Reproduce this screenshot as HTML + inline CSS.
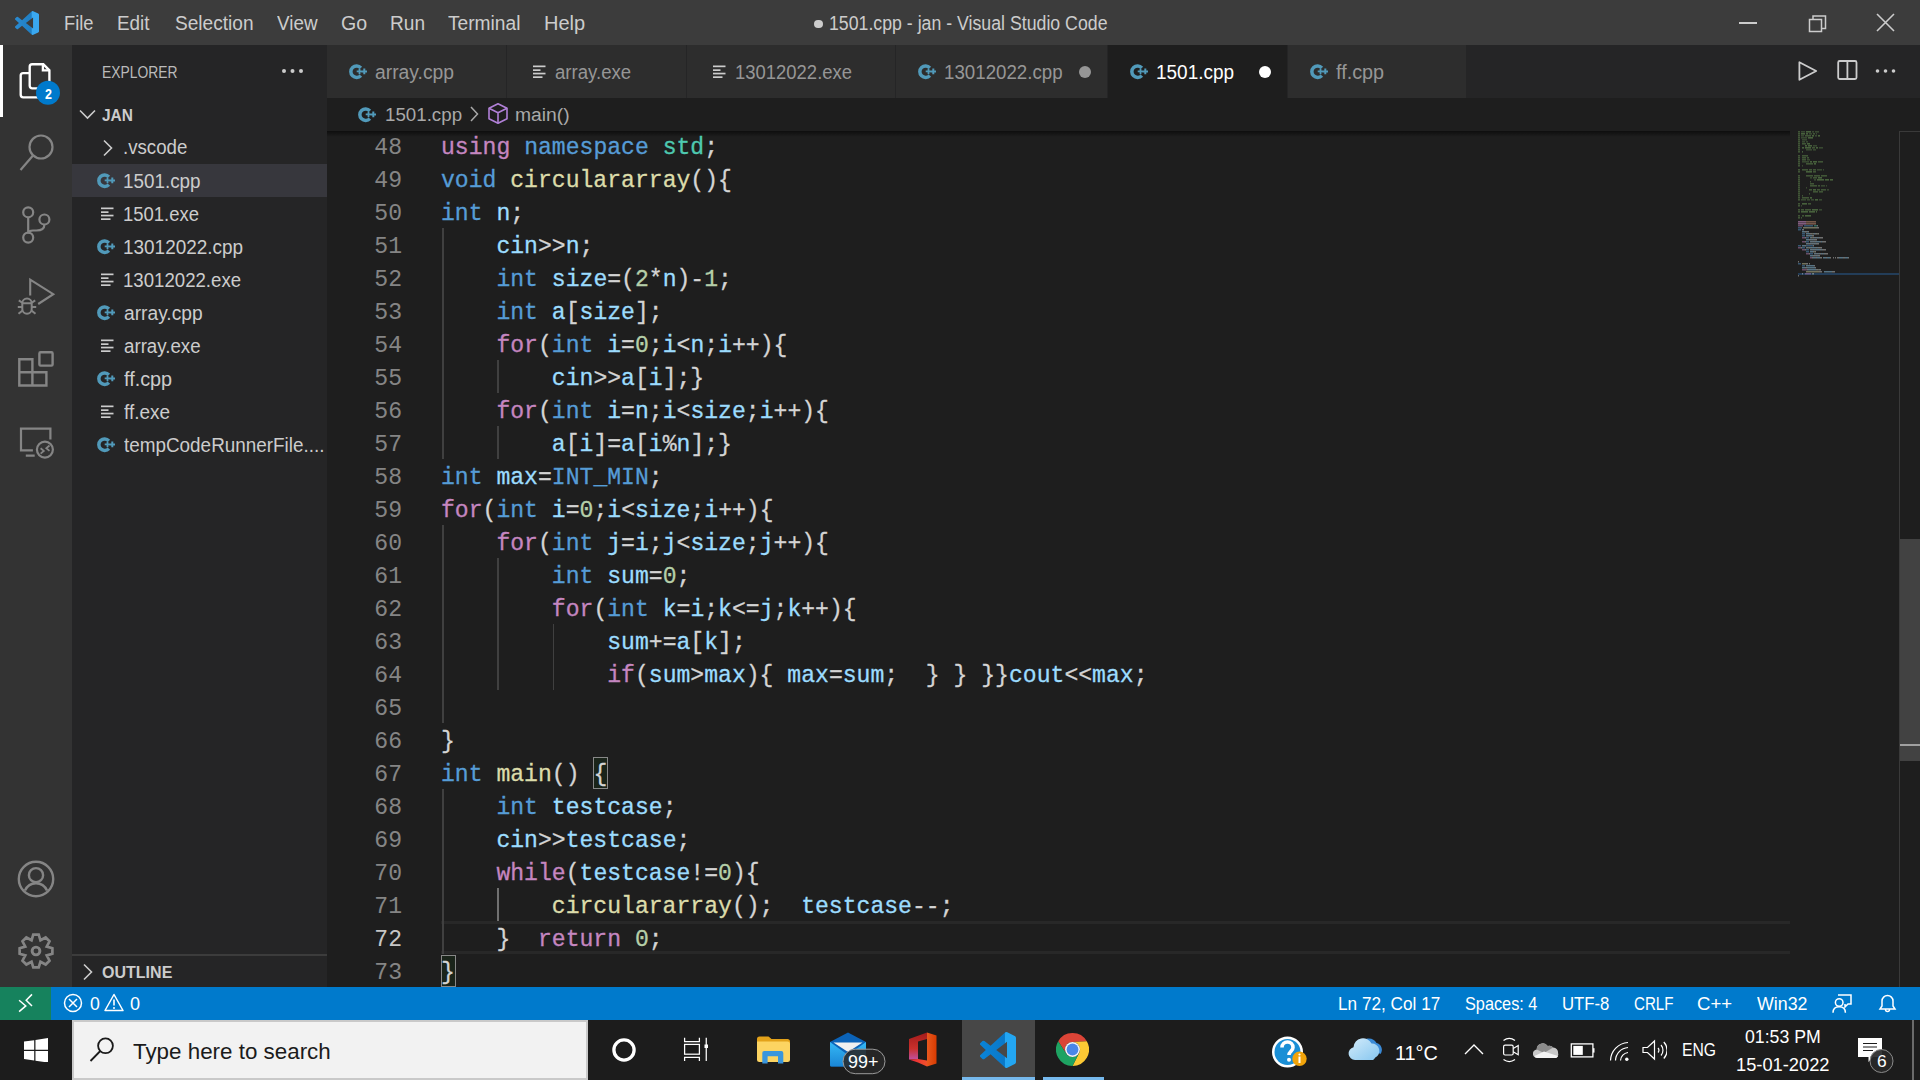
<!DOCTYPE html>
<html><head><meta charset="utf-8"><style>
html,body{margin:0;padding:0;width:1920px;height:1080px;overflow:hidden;background:#1e1e1e;position:relative}
body{font-family:'Liberation Sans', sans-serif}
</style></head><body>
<div style="position:absolute;left:0px;top:0px;width:1920px;height:45px;background:#3c3c3c;"></div>
<div style="position:absolute;left:0px;top:45px;width:72px;height:942px;background:#333333;"></div>
<div style="position:absolute;left:72px;top:45px;width:255px;height:942px;background:#252526;"></div>
<div style="position:absolute;left:327px;top:45px;width:1593px;height:52.5px;background:#252526;"></div>
<div style="position:absolute;left:327px;top:97.5px;width:1593px;height:889.5px;background:#1e1e1e;"></div>
<div style="position:absolute;left:0px;top:987px;width:1920px;height:33px;background:#007acc;"></div>
<div style="position:absolute;left:0px;top:987px;width:51px;height:33px;background:#16825d;"></div>
<div style="position:absolute;left:0px;top:1020px;width:1920px;height:60px;background:#1c1c1c;"></div>
<div style="position:absolute;left:814px;top:19.5px;width:8.5px;height:8.5px;border-radius:50%;background:#cccccc"></div>
<svg style="position:absolute;left:14.9px;top:10.8px" width="24.1" height="24" viewBox="0 0 24 24"><defs><linearGradient id="lg1" x1="0" y1="0" x2="1" y2="0"><stop offset="0" stop-color="#2a8ad0"/><stop offset="0.68" stop-color="#1f7fc4"/><stop offset="0.7" stop-color="#3aa8f0"/><stop offset="1" stop-color="#3aa8f0"/></linearGradient></defs><path fill="url(#lg1)" d="M23.15 2.587L18.21.21a1.494 1.494 0 0 0-1.705.29l-9.46 8.63-4.12-3.128a.999.999 0 0 0-1.276.057L.327 7.261A1 1 0 0 0 .326 8.74L3.899 12 .326 15.26a1 1 0 0 0 .001 1.479L1.65 17.94a.999.999 0 0 0 1.276.057l4.12-3.128 9.46 8.63a1.492 1.492 0 0 0 1.704.29l4.942-2.377A1.5 1.5 0 0 0 24 20.06V3.939a1.5 1.5 0 0 0-.85-1.352zm-5.146 14.861L10.826 12l7.178-5.448v10.896z"/></svg>
<div style="position:absolute;left:1739px;top:22px;width:18px;height:1.5px;background:#cccccc"></div>
<svg style="position:absolute;left:1805px;top:10px" width="26" height="26" viewBox="0 0 26 26"><path fill="none" stroke="#cccccc" stroke-width="1.5" d="M4.5 9.5h12v12h-12z M8 9.5V6h12.5v12.5H16.5"/></svg>
<svg style="position:absolute;left:1874px;top:11px" width="24" height="24" viewBox="0 0 24 24"><path stroke="#cccccc" stroke-width="1.6" d="M3 3L20 20M20 3L3 20"/></svg>
<div style="position:absolute;left:0px;top:45px;width:3px;height:72px;background:#ffffff;"></div>
<svg style="position:absolute;left:0;top:45px" width="72" height="942" viewBox="0 45 72 942">
<g fill="none" stroke="#ffffff" stroke-width="2.35" stroke-linejoin="miter">
<path d="M29.7 66.7a2.5 2.5 0 0 1 2.5-2.5H43.3L49.4 70.3V85.8a2.5 2.5 0 0 1-2.5 2.5H32.2a2.5 2.5 0 0 1-2.5-2.5Z"/>
<path d="M42.9 64.2V70.4H49.4"/>
<path d="M29.7 73.1H23.2a2.5 2.5 0 0 0-2.5 2.5V94.8a2.5 2.5 0 0 0 2.5 2.5H38"/>
</g>
<circle cx="48" cy="92.7" r="12" fill="#007acc"/>
<g fill="none" stroke="#858585" stroke-width="2.2">
<circle cx="41" cy="147" r="11.5"/>
<path d="M33 155.5L20.5 170"/>
<circle cx="28.2" cy="212.3" r="5"/><circle cx="44.4" cy="219.5" r="5"/><circle cx="28.2" cy="237.6" r="5"/>
<path d="M28.2 217.3v15.3 M44.4 224.5c0 4-3 6-8 6h-3.5c-2.5 0-4.3 1-4.3 3"/>
<path d="M30.2 295.6V279.6L53.3 294.2 38.2 304" stroke-width="2.1"/>
<path d="M22.3 303.3A4.7 4.7 0 0 1 31.7 303.3Z M22.3 303.3V309A4.7 4.7 0 0 0 31.7 309V303.3" stroke-width="2"/>
<path d="M18.8 300.4L22.3 302.8 M35.2 300.4L31.7 302.8 M17.8 307.1H22.3 M31.7 307.1H36.2 M18.5 313.8L22.6 310.5 M35.5 313.8L31.4 310.5" stroke-width="2"/>
<path d="M19.3 359.2h13.1v26.3h-13.1z M19.3 372.3h27.1v13.2H32.4" stroke-width="2.4"/>
<rect x="39.4" y="352.2" width="13.2" height="13.4" rx="1.2" stroke-width="2.4"/>
<path d="M50.4 439.6V428.6H21V450.4H32.9 M25.8 455.6h8.9" stroke-width="2.2"/>
<circle cx="44.9" cy="449.6" r="8" stroke-width="2.2"/>
<path d="M40.6 448.2l3.2 2.7-3.2 2.7 M49.5 445.5l-3.2 2.7 3.2 2.7" stroke-width="1.8"/>
<circle cx="36" cy="879" r="17.2" stroke-width="2.4"/>
<circle cx="36" cy="875.2" r="7.1" stroke-width="2.4"/>
<path d="M25 890.5c2-4.5 6.5-7.3 11-7.3s9 2.8 11 7.3" stroke-width="2.4"/>
<circle cx="36" cy="951" r="3.9" stroke-width="2.9"/>
<path d="M31.56 940.28 L33.26 934.63 L38.74 934.63 L40.44 940.28 L45.64 937.49 L49.51 941.36 L46.72 946.56 L52.37 948.26 L52.37 953.74 L46.72 955.44 L49.51 960.64 L45.64 964.51 L40.44 961.72 L38.74 967.37 L33.26 967.37 L31.56 961.72 L26.36 964.51 L22.49 960.64 L25.28 955.44 L19.63 953.74 L19.63 948.26 L25.28 946.56 L22.49 941.36 L26.36 937.49Z" stroke-width="2.7" stroke-linejoin="miter"/>
</g>
</svg>
<svg style="position:absolute;left:280px;top:66px" width="26" height="10"><circle cx="4" cy="5" r="2" fill="#cccccc"/><circle cx="12.5" cy="5" r="2" fill="#cccccc"/><circle cx="21" cy="5" r="2" fill="#cccccc"/></svg>
<svg style="position:absolute;left:76px;top:106px" width="22" height="16"><path d="M4 4.5l7.5 7.5 7.5-7.5" fill="none" stroke="#cccccc" stroke-width="1.6"/></svg>
<div style="position:absolute;left:72px;top:164px;width:255px;height:33px;background:#37373d;"></div>
<svg style="position:absolute;left:100px;top:138px" width="16" height="20"><path d="M4 2.5l7.5 7.5-7.5 7.5" fill="none" stroke="#cccccc" stroke-width="1.6"/></svg>
<svg style="position:absolute;left:97px;top:173px" width="18" height="16" viewBox="0 0 18 16"><path fill="none" stroke="#519aba" stroke-width="3.5" d="M11.87 3.85A5.75 5.75 0 1 0 11.87 11.55"/><path fill="#519aba" d="M7.7 6.5h1.9V4.6h1.8v1.9h1.9v1.8h-1.9v1.9H9.6V8.3H7.7z M12.4 6.4h1.9V4.5h2v1.9h1.9v2h-1.9v1.9h-2V8.4h-1.9z"/></svg>
<svg style="position:absolute;left:101px;top:207px" width="14" height="14" viewBox="0 0 14 14"><g fill="#cccccc"><rect x="0" y="0.5" width="12.5" height="1.7"/><rect x="0" y="4.3" width="7.5" height="1.7"/><rect x="0" y="7.7" width="12.5" height="1.7"/><rect x="0" y="11.3" width="9.5" height="1.7"/></g></svg>
<svg style="position:absolute;left:97px;top:239px" width="18" height="16" viewBox="0 0 18 16"><path fill="none" stroke="#519aba" stroke-width="3.5" d="M11.87 3.85A5.75 5.75 0 1 0 11.87 11.55"/><path fill="#519aba" d="M7.7 6.5h1.9V4.6h1.8v1.9h1.9v1.8h-1.9v1.9H9.6V8.3H7.7z M12.4 6.4h1.9V4.5h2v1.9h1.9v2h-1.9v1.9h-2V8.4h-1.9z"/></svg>
<svg style="position:absolute;left:101px;top:273px" width="14" height="14" viewBox="0 0 14 14"><g fill="#cccccc"><rect x="0" y="0.5" width="12.5" height="1.7"/><rect x="0" y="4.3" width="7.5" height="1.7"/><rect x="0" y="7.7" width="12.5" height="1.7"/><rect x="0" y="11.3" width="9.5" height="1.7"/></g></svg>
<svg style="position:absolute;left:97px;top:305px" width="18" height="16" viewBox="0 0 18 16"><path fill="none" stroke="#519aba" stroke-width="3.5" d="M11.87 3.85A5.75 5.75 0 1 0 11.87 11.55"/><path fill="#519aba" d="M7.7 6.5h1.9V4.6h1.8v1.9h1.9v1.8h-1.9v1.9H9.6V8.3H7.7z M12.4 6.4h1.9V4.5h2v1.9h1.9v2h-1.9v1.9h-2V8.4h-1.9z"/></svg>
<svg style="position:absolute;left:101px;top:339px" width="14" height="14" viewBox="0 0 14 14"><g fill="#cccccc"><rect x="0" y="0.5" width="12.5" height="1.7"/><rect x="0" y="4.3" width="7.5" height="1.7"/><rect x="0" y="7.7" width="12.5" height="1.7"/><rect x="0" y="11.3" width="9.5" height="1.7"/></g></svg>
<svg style="position:absolute;left:97px;top:371px" width="18" height="16" viewBox="0 0 18 16"><path fill="none" stroke="#519aba" stroke-width="3.5" d="M11.87 3.85A5.75 5.75 0 1 0 11.87 11.55"/><path fill="#519aba" d="M7.7 6.5h1.9V4.6h1.8v1.9h1.9v1.8h-1.9v1.9H9.6V8.3H7.7z M12.4 6.4h1.9V4.5h2v1.9h1.9v2h-1.9v1.9h-2V8.4h-1.9z"/></svg>
<svg style="position:absolute;left:101px;top:405px" width="14" height="14" viewBox="0 0 14 14"><g fill="#cccccc"><rect x="0" y="0.5" width="12.5" height="1.7"/><rect x="0" y="4.3" width="7.5" height="1.7"/><rect x="0" y="7.7" width="12.5" height="1.7"/><rect x="0" y="11.3" width="9.5" height="1.7"/></g></svg>
<svg style="position:absolute;left:97px;top:437px" width="18" height="16" viewBox="0 0 18 16"><path fill="none" stroke="#519aba" stroke-width="3.5" d="M11.87 3.85A5.75 5.75 0 1 0 11.87 11.55"/><path fill="#519aba" d="M7.7 6.5h1.9V4.6h1.8v1.9h1.9v1.8h-1.9v1.9H9.6V8.3H7.7z M12.4 6.4h1.9V4.5h2v1.9h1.9v2h-1.9v1.9h-2V8.4h-1.9z"/></svg>
<div style="position:absolute;left:72px;top:954px;width:255px;height:2px;background:#3c3c3c;"></div>
<svg style="position:absolute;left:80px;top:962px" width="16" height="20"><path d="M4 2.5l7.5 7.5-7.5 7.5" fill="none" stroke="#cccccc" stroke-width="1.6"/></svg>
<div style="position:absolute;left:327px;top:45px;width:179px;height:52.5px;background:#2d2d2d;"></div>
<svg style="position:absolute;left:349px;top:64px" width="18" height="16" viewBox="0 0 18 16"><path fill="none" stroke="#519aba" stroke-width="3.5" d="M11.87 3.85A5.75 5.75 0 1 0 11.87 11.55"/><path fill="#519aba" d="M7.7 6.5h1.9V4.6h1.8v1.9h1.9v1.8h-1.9v1.9H9.6V8.3H7.7z M12.4 6.4h1.9V4.5h2v1.9h1.9v2h-1.9v1.9h-2V8.4h-1.9z"/></svg>
<div style="position:absolute;left:507px;top:45px;width:179px;height:52.5px;background:#2d2d2d;"></div>
<svg style="position:absolute;left:533px;top:65px" width="14" height="14" viewBox="0 0 14 14"><g fill="#cccccc"><rect x="0" y="0.5" width="12.5" height="1.7"/><rect x="0" y="4.3" width="7.5" height="1.7"/><rect x="0" y="7.7" width="12.5" height="1.7"/><rect x="0" y="11.3" width="9.5" height="1.7"/></g></svg>
<div style="position:absolute;left:687px;top:45px;width:208px;height:52.5px;background:#2d2d2d;"></div>
<svg style="position:absolute;left:713px;top:65px" width="14" height="14" viewBox="0 0 14 14"><g fill="#cccccc"><rect x="0" y="0.5" width="12.5" height="1.7"/><rect x="0" y="4.3" width="7.5" height="1.7"/><rect x="0" y="7.7" width="12.5" height="1.7"/><rect x="0" y="11.3" width="9.5" height="1.7"/></g></svg>
<div style="position:absolute;left:896px;top:45px;width:211px;height:52.5px;background:#2d2d2d;"></div>
<svg style="position:absolute;left:918px;top:64px" width="18" height="16" viewBox="0 0 18 16"><path fill="none" stroke="#519aba" stroke-width="3.5" d="M11.87 3.85A5.75 5.75 0 1 0 11.87 11.55"/><path fill="#519aba" d="M7.7 6.5h1.9V4.6h1.8v1.9h1.9v1.8h-1.9v1.9H9.6V8.3H7.7z M12.4 6.4h1.9V4.5h2v1.9h1.9v2h-1.9v1.9h-2V8.4h-1.9z"/></svg>
<div style="position:absolute;left:1079.4px;top:65.5px;width:12px;height:12px;border-radius:50%;background:#969696"></div>
<div style="position:absolute;left:1108px;top:45px;width:179px;height:52.5px;background:#1e1e1e;"></div>
<svg style="position:absolute;left:1130px;top:64px" width="18" height="16" viewBox="0 0 18 16"><path fill="none" stroke="#519aba" stroke-width="3.5" d="M11.87 3.85A5.75 5.75 0 1 0 11.87 11.55"/><path fill="#519aba" d="M7.7 6.5h1.9V4.6h1.8v1.9h1.9v1.8h-1.9v1.9H9.6V8.3H7.7z M12.4 6.4h1.9V4.5h2v1.9h1.9v2h-1.9v1.9h-2V8.4h-1.9z"/></svg>
<div style="position:absolute;left:1259.4px;top:65.5px;width:12px;height:12px;border-radius:50%;background:#ffffff"></div>
<div style="position:absolute;left:1288px;top:45px;width:178px;height:52.5px;background:#2d2d2d;"></div>
<svg style="position:absolute;left:1310px;top:64px" width="18" height="16" viewBox="0 0 18 16"><path fill="none" stroke="#519aba" stroke-width="3.5" d="M11.87 3.85A5.75 5.75 0 1 0 11.87 11.55"/><path fill="#519aba" d="M7.7 6.5h1.9V4.6h1.8v1.9h1.9v1.8h-1.9v1.9H9.6V8.3H7.7z M12.4 6.4h1.9V4.5h2v1.9h1.9v2h-1.9v1.9h-2V8.4h-1.9z"/></svg>
<svg style="position:absolute;left:1790px;top:52px" width="110" height="36" viewBox="1790 52 110 36"><g fill="none" stroke="#cccccc" stroke-width="1.8" stroke-linejoin="round">
<path d="M1799.4 62.2v17.6l16.8-8.8z" stroke-linejoin="round"/>
<rect x="1838.2" y="61" width="18.3" height="18" rx="1.5"/><path d="M1847.4 61v18"/></g>
<g fill="#cccccc"><circle cx="1877.5" cy="71" r="1.8"/><circle cx="1885.5" cy="71" r="1.8"/><circle cx="1893.5" cy="71" r="1.8"/></g></svg>
<svg style="position:absolute;left:358px;top:107px" width="18" height="16" viewBox="0 0 18 16"><path fill="none" stroke="#519aba" stroke-width="3.5" d="M11.87 3.85A5.75 5.75 0 1 0 11.87 11.55"/><path fill="#519aba" d="M7.7 6.5h1.9V4.6h1.8v1.9h1.9v1.8h-1.9v1.9H9.6V8.3H7.7z M12.4 6.4h1.9V4.5h2v1.9h1.9v2h-1.9v1.9h-2V8.4h-1.9z"/></svg>
<svg style="position:absolute;left:466px;top:104px" width="16" height="20"><path d="M5 3l6.5 7-6.5 7" fill="none" stroke="#a9a9a9" stroke-width="1.5"/></svg>
<svg style="position:absolute;left:487px;top:102px" width="22" height="23" viewBox="0 0 22 23"><g fill="none" stroke="#b180d7" stroke-width="1.6" stroke-linejoin="round"><path d="M11 1.8L20 6.3v10.4L11 21.2 2 16.7V6.3z"/><path d="M2 6.3l9 4.5 9-4.5 M11 10.8v10.4"/></g></svg>
<div style="position:absolute;left:327px;top:130.5px;width:1463px;height:6px;background:linear-gradient(#000000 0%, rgba(0,0,0,0) 100%);opacity:0.55"></div>
<div style="position:absolute;left:441px;top:921px;width:1349px;height:33px;background:transparent;box-sizing:border-box;border-top:3px solid #282828;border-bottom:3px solid #282828"></div>
<div style="position:absolute;left:442.0px;top:228px;width:1.5px;height:33px;background:#404040;"></div>
<div style="position:absolute;left:442.0px;top:261px;width:1.5px;height:33px;background:#404040;"></div>
<div style="position:absolute;left:442.0px;top:294px;width:1.5px;height:33px;background:#404040;"></div>
<div style="position:absolute;left:442.0px;top:327px;width:1.5px;height:33px;background:#404040;"></div>
<div style="position:absolute;left:442.0px;top:360px;width:1.5px;height:33px;background:#404040;"></div>
<div style="position:absolute;left:497.4px;top:360px;width:1.5px;height:33px;background:#404040;"></div>
<div style="position:absolute;left:442.0px;top:393px;width:1.5px;height:33px;background:#404040;"></div>
<div style="position:absolute;left:442.0px;top:426px;width:1.5px;height:33px;background:#404040;"></div>
<div style="position:absolute;left:497.4px;top:426px;width:1.5px;height:33px;background:#404040;"></div>
<div style="position:absolute;left:442.0px;top:525px;width:1.5px;height:33px;background:#404040;"></div>
<div style="position:absolute;left:442.0px;top:558px;width:1.5px;height:33px;background:#404040;"></div>
<div style="position:absolute;left:497.4px;top:558px;width:1.5px;height:33px;background:#404040;"></div>
<div style="position:absolute;left:442.0px;top:591px;width:1.5px;height:33px;background:#404040;"></div>
<div style="position:absolute;left:497.4px;top:591px;width:1.5px;height:33px;background:#404040;"></div>
<div style="position:absolute;left:442.0px;top:624px;width:1.5px;height:33px;background:#404040;"></div>
<div style="position:absolute;left:497.4px;top:624px;width:1.5px;height:33px;background:#404040;"></div>
<div style="position:absolute;left:552.8px;top:624px;width:1.5px;height:33px;background:#404040;"></div>
<div style="position:absolute;left:442.0px;top:657px;width:1.5px;height:33px;background:#404040;"></div>
<div style="position:absolute;left:497.4px;top:657px;width:1.5px;height:33px;background:#404040;"></div>
<div style="position:absolute;left:552.8px;top:657px;width:1.5px;height:33px;background:#404040;"></div>
<div style="position:absolute;left:442.0px;top:690px;width:1.5px;height:33px;background:#404040;"></div>
<div style="position:absolute;left:442.0px;top:789px;width:1.5px;height:33px;background:#404040;"></div>
<div style="position:absolute;left:442.0px;top:822px;width:1.5px;height:33px;background:#404040;"></div>
<div style="position:absolute;left:442.0px;top:855px;width:1.5px;height:33px;background:#404040;"></div>
<div style="position:absolute;left:442.0px;top:888px;width:1.5px;height:33px;background:#404040;"></div>
<div style="position:absolute;left:497.4px;top:888px;width:1.5px;height:33px;background:#707070;"></div>
<div style="position:absolute;left:442.0px;top:921px;width:1.5px;height:33px;background:#404040;"></div>
<div style="position:absolute;left:592.85px;top:757px;width:15px;height:32px;background:rgba(0,100,0,0.1);box-sizing:border-box;border:1.5px solid #888888"></div>
<div style="position:absolute;left:440.5px;top:955px;width:15px;height:32px;background:rgba(0,100,0,0.1);box-sizing:border-box;border:1.5px solid #888888"></div>
<div style="position:absolute;left:340px;top:132.3px;width:62px;height:33px;line-height:33px;text-align:right;font:23.08px/33px 'Liberation Mono', monospace;color:#858585;white-space:pre">48</div>
<div style="position:absolute;left:441px;top:132.3px;height:33px;font:23.08px/33px 'Liberation Mono', monospace;white-space:pre;letter-spacing:0.002px;-webkit-text-stroke:0.3px"><span style="color:#c586c0">using</span><span style="color:#d4d4d4"> </span><span style="color:#569cd6">namespace</span><span style="color:#d4d4d4"> </span><span style="color:#4ec9b0">std</span><span style="color:#d4d4d4">;</span></div>
<div style="position:absolute;left:340px;top:165.3px;width:62px;height:33px;line-height:33px;text-align:right;font:23.08px/33px 'Liberation Mono', monospace;color:#858585;white-space:pre">49</div>
<div style="position:absolute;left:441px;top:165.3px;height:33px;font:23.08px/33px 'Liberation Mono', monospace;white-space:pre;letter-spacing:0.002px;-webkit-text-stroke:0.3px"><span style="color:#569cd6">void</span><span style="color:#d4d4d4"> </span><span style="color:#dcdcaa">circulararray</span><span style="color:#d4d4d4">(){</span></div>
<div style="position:absolute;left:340px;top:198.3px;width:62px;height:33px;line-height:33px;text-align:right;font:23.08px/33px 'Liberation Mono', monospace;color:#858585;white-space:pre">50</div>
<div style="position:absolute;left:441px;top:198.3px;height:33px;font:23.08px/33px 'Liberation Mono', monospace;white-space:pre;letter-spacing:0.002px;-webkit-text-stroke:0.3px"><span style="color:#569cd6">int</span><span style="color:#d4d4d4"> </span><span style="color:#9cdcfe">n</span><span style="color:#d4d4d4">;</span></div>
<div style="position:absolute;left:340px;top:231.3px;width:62px;height:33px;line-height:33px;text-align:right;font:23.08px/33px 'Liberation Mono', monospace;color:#858585;white-space:pre">51</div>
<div style="position:absolute;left:441px;top:231.3px;height:33px;font:23.08px/33px 'Liberation Mono', monospace;white-space:pre;letter-spacing:0.002px;-webkit-text-stroke:0.3px"><span style="color:#d4d4d4">    </span><span style="color:#9cdcfe">cin</span><span style="color:#d4d4d4">&gt;&gt;</span><span style="color:#9cdcfe">n</span><span style="color:#d4d4d4">;</span></div>
<div style="position:absolute;left:340px;top:264.3px;width:62px;height:33px;line-height:33px;text-align:right;font:23.08px/33px 'Liberation Mono', monospace;color:#858585;white-space:pre">52</div>
<div style="position:absolute;left:441px;top:264.3px;height:33px;font:23.08px/33px 'Liberation Mono', monospace;white-space:pre;letter-spacing:0.002px;-webkit-text-stroke:0.3px"><span style="color:#d4d4d4">    </span><span style="color:#569cd6">int</span><span style="color:#d4d4d4"> </span><span style="color:#9cdcfe">size</span><span style="color:#d4d4d4">=(</span><span style="color:#b5cea8">2</span><span style="color:#d4d4d4">*</span><span style="color:#9cdcfe">n</span><span style="color:#d4d4d4">)-</span><span style="color:#b5cea8">1</span><span style="color:#d4d4d4">;</span></div>
<div style="position:absolute;left:340px;top:297.3px;width:62px;height:33px;line-height:33px;text-align:right;font:23.08px/33px 'Liberation Mono', monospace;color:#858585;white-space:pre">53</div>
<div style="position:absolute;left:441px;top:297.3px;height:33px;font:23.08px/33px 'Liberation Mono', monospace;white-space:pre;letter-spacing:0.002px;-webkit-text-stroke:0.3px"><span style="color:#d4d4d4">    </span><span style="color:#569cd6">int</span><span style="color:#d4d4d4"> </span><span style="color:#9cdcfe">a</span><span style="color:#d4d4d4">[</span><span style="color:#9cdcfe">size</span><span style="color:#d4d4d4">];</span></div>
<div style="position:absolute;left:340px;top:330.3px;width:62px;height:33px;line-height:33px;text-align:right;font:23.08px/33px 'Liberation Mono', monospace;color:#858585;white-space:pre">54</div>
<div style="position:absolute;left:441px;top:330.3px;height:33px;font:23.08px/33px 'Liberation Mono', monospace;white-space:pre;letter-spacing:0.002px;-webkit-text-stroke:0.3px"><span style="color:#d4d4d4">    </span><span style="color:#c586c0">for</span><span style="color:#d4d4d4">(</span><span style="color:#569cd6">int</span><span style="color:#d4d4d4"> </span><span style="color:#9cdcfe">i</span><span style="color:#d4d4d4">=</span><span style="color:#b5cea8">0</span><span style="color:#d4d4d4">;</span><span style="color:#9cdcfe">i</span><span style="color:#d4d4d4">&lt;</span><span style="color:#9cdcfe">n</span><span style="color:#d4d4d4">;</span><span style="color:#9cdcfe">i</span><span style="color:#d4d4d4">++){</span></div>
<div style="position:absolute;left:340px;top:363.3px;width:62px;height:33px;line-height:33px;text-align:right;font:23.08px/33px 'Liberation Mono', monospace;color:#858585;white-space:pre">55</div>
<div style="position:absolute;left:441px;top:363.3px;height:33px;font:23.08px/33px 'Liberation Mono', monospace;white-space:pre;letter-spacing:0.002px;-webkit-text-stroke:0.3px"><span style="color:#d4d4d4">        </span><span style="color:#9cdcfe">cin</span><span style="color:#d4d4d4">&gt;&gt;</span><span style="color:#9cdcfe">a</span><span style="color:#d4d4d4">[</span><span style="color:#9cdcfe">i</span><span style="color:#d4d4d4">];}</span></div>
<div style="position:absolute;left:340px;top:396.3px;width:62px;height:33px;line-height:33px;text-align:right;font:23.08px/33px 'Liberation Mono', monospace;color:#858585;white-space:pre">56</div>
<div style="position:absolute;left:441px;top:396.3px;height:33px;font:23.08px/33px 'Liberation Mono', monospace;white-space:pre;letter-spacing:0.002px;-webkit-text-stroke:0.3px"><span style="color:#d4d4d4">    </span><span style="color:#c586c0">for</span><span style="color:#d4d4d4">(</span><span style="color:#569cd6">int</span><span style="color:#d4d4d4"> </span><span style="color:#9cdcfe">i</span><span style="color:#d4d4d4">=</span><span style="color:#9cdcfe">n</span><span style="color:#d4d4d4">;</span><span style="color:#9cdcfe">i</span><span style="color:#d4d4d4">&lt;</span><span style="color:#9cdcfe">size</span><span style="color:#d4d4d4">;</span><span style="color:#9cdcfe">i</span><span style="color:#d4d4d4">++){</span></div>
<div style="position:absolute;left:340px;top:429.3px;width:62px;height:33px;line-height:33px;text-align:right;font:23.08px/33px 'Liberation Mono', monospace;color:#858585;white-space:pre">57</div>
<div style="position:absolute;left:441px;top:429.3px;height:33px;font:23.08px/33px 'Liberation Mono', monospace;white-space:pre;letter-spacing:0.002px;-webkit-text-stroke:0.3px"><span style="color:#d4d4d4">        </span><span style="color:#9cdcfe">a</span><span style="color:#d4d4d4">[</span><span style="color:#9cdcfe">i</span><span style="color:#d4d4d4">]=</span><span style="color:#9cdcfe">a</span><span style="color:#d4d4d4">[</span><span style="color:#9cdcfe">i</span><span style="color:#d4d4d4">%</span><span style="color:#9cdcfe">n</span><span style="color:#d4d4d4">];}</span></div>
<div style="position:absolute;left:340px;top:462.3px;width:62px;height:33px;line-height:33px;text-align:right;font:23.08px/33px 'Liberation Mono', monospace;color:#858585;white-space:pre">58</div>
<div style="position:absolute;left:441px;top:462.3px;height:33px;font:23.08px/33px 'Liberation Mono', monospace;white-space:pre;letter-spacing:0.002px;-webkit-text-stroke:0.3px"><span style="color:#569cd6">int</span><span style="color:#d4d4d4"> </span><span style="color:#9cdcfe">max</span><span style="color:#d4d4d4">=</span><span style="color:#569cd6">INT_MIN</span><span style="color:#d4d4d4">;</span></div>
<div style="position:absolute;left:340px;top:495.3px;width:62px;height:33px;line-height:33px;text-align:right;font:23.08px/33px 'Liberation Mono', monospace;color:#858585;white-space:pre">59</div>
<div style="position:absolute;left:441px;top:495.3px;height:33px;font:23.08px/33px 'Liberation Mono', monospace;white-space:pre;letter-spacing:0.002px;-webkit-text-stroke:0.3px"><span style="color:#c586c0">for</span><span style="color:#d4d4d4">(</span><span style="color:#569cd6">int</span><span style="color:#d4d4d4"> </span><span style="color:#9cdcfe">i</span><span style="color:#d4d4d4">=</span><span style="color:#b5cea8">0</span><span style="color:#d4d4d4">;</span><span style="color:#9cdcfe">i</span><span style="color:#d4d4d4">&lt;</span><span style="color:#9cdcfe">size</span><span style="color:#d4d4d4">;</span><span style="color:#9cdcfe">i</span><span style="color:#d4d4d4">++){</span></div>
<div style="position:absolute;left:340px;top:528.3px;width:62px;height:33px;line-height:33px;text-align:right;font:23.08px/33px 'Liberation Mono', monospace;color:#858585;white-space:pre">60</div>
<div style="position:absolute;left:441px;top:528.3px;height:33px;font:23.08px/33px 'Liberation Mono', monospace;white-space:pre;letter-spacing:0.002px;-webkit-text-stroke:0.3px"><span style="color:#d4d4d4">    </span><span style="color:#c586c0">for</span><span style="color:#d4d4d4">(</span><span style="color:#569cd6">int</span><span style="color:#d4d4d4"> </span><span style="color:#9cdcfe">j</span><span style="color:#d4d4d4">=</span><span style="color:#9cdcfe">i</span><span style="color:#d4d4d4">;</span><span style="color:#9cdcfe">j</span><span style="color:#d4d4d4">&lt;</span><span style="color:#9cdcfe">size</span><span style="color:#d4d4d4">;</span><span style="color:#9cdcfe">j</span><span style="color:#d4d4d4">++){</span></div>
<div style="position:absolute;left:340px;top:561.3px;width:62px;height:33px;line-height:33px;text-align:right;font:23.08px/33px 'Liberation Mono', monospace;color:#858585;white-space:pre">61</div>
<div style="position:absolute;left:441px;top:561.3px;height:33px;font:23.08px/33px 'Liberation Mono', monospace;white-space:pre;letter-spacing:0.002px;-webkit-text-stroke:0.3px"><span style="color:#d4d4d4">        </span><span style="color:#569cd6">int</span><span style="color:#d4d4d4"> </span><span style="color:#9cdcfe">sum</span><span style="color:#d4d4d4">=</span><span style="color:#b5cea8">0</span><span style="color:#d4d4d4">;</span></div>
<div style="position:absolute;left:340px;top:594.3px;width:62px;height:33px;line-height:33px;text-align:right;font:23.08px/33px 'Liberation Mono', monospace;color:#858585;white-space:pre">62</div>
<div style="position:absolute;left:441px;top:594.3px;height:33px;font:23.08px/33px 'Liberation Mono', monospace;white-space:pre;letter-spacing:0.002px;-webkit-text-stroke:0.3px"><span style="color:#d4d4d4">        </span><span style="color:#c586c0">for</span><span style="color:#d4d4d4">(</span><span style="color:#569cd6">int</span><span style="color:#d4d4d4"> </span><span style="color:#9cdcfe">k</span><span style="color:#d4d4d4">=</span><span style="color:#9cdcfe">i</span><span style="color:#d4d4d4">;</span><span style="color:#9cdcfe">k</span><span style="color:#d4d4d4">&lt;=</span><span style="color:#9cdcfe">j</span><span style="color:#d4d4d4">;</span><span style="color:#9cdcfe">k</span><span style="color:#d4d4d4">++){</span></div>
<div style="position:absolute;left:340px;top:627.3px;width:62px;height:33px;line-height:33px;text-align:right;font:23.08px/33px 'Liberation Mono', monospace;color:#858585;white-space:pre">63</div>
<div style="position:absolute;left:441px;top:627.3px;height:33px;font:23.08px/33px 'Liberation Mono', monospace;white-space:pre;letter-spacing:0.002px;-webkit-text-stroke:0.3px"><span style="color:#d4d4d4">            </span><span style="color:#9cdcfe">sum</span><span style="color:#d4d4d4">+=</span><span style="color:#9cdcfe">a</span><span style="color:#d4d4d4">[</span><span style="color:#9cdcfe">k</span><span style="color:#d4d4d4">];</span></div>
<div style="position:absolute;left:340px;top:660.3px;width:62px;height:33px;line-height:33px;text-align:right;font:23.08px/33px 'Liberation Mono', monospace;color:#858585;white-space:pre">64</div>
<div style="position:absolute;left:441px;top:660.3px;height:33px;font:23.08px/33px 'Liberation Mono', monospace;white-space:pre;letter-spacing:0.002px;-webkit-text-stroke:0.3px"><span style="color:#d4d4d4">            </span><span style="color:#c586c0">if</span><span style="color:#d4d4d4">(</span><span style="color:#9cdcfe">sum</span><span style="color:#d4d4d4">&gt;</span><span style="color:#9cdcfe">max</span><span style="color:#d4d4d4">){ </span><span style="color:#9cdcfe">max</span><span style="color:#d4d4d4">=</span><span style="color:#9cdcfe">sum</span><span style="color:#d4d4d4">;  } } }}</span><span style="color:#9cdcfe">cout</span><span style="color:#d4d4d4">&lt;&lt;</span><span style="color:#9cdcfe">max</span><span style="color:#d4d4d4">;</span></div>
<div style="position:absolute;left:340px;top:693.3px;width:62px;height:33px;line-height:33px;text-align:right;font:23.08px/33px 'Liberation Mono', monospace;color:#858585;white-space:pre">65</div>
<div style="position:absolute;left:441px;top:693.3px;height:33px;font:23.08px/33px 'Liberation Mono', monospace;white-space:pre;letter-spacing:0.002px;-webkit-text-stroke:0.3px"></div>
<div style="position:absolute;left:340px;top:726.3px;width:62px;height:33px;line-height:33px;text-align:right;font:23.08px/33px 'Liberation Mono', monospace;color:#858585;white-space:pre">66</div>
<div style="position:absolute;left:441px;top:726.3px;height:33px;font:23.08px/33px 'Liberation Mono', monospace;white-space:pre;letter-spacing:0.002px;-webkit-text-stroke:0.3px"><span style="color:#d4d4d4">}</span></div>
<div style="position:absolute;left:340px;top:759.3px;width:62px;height:33px;line-height:33px;text-align:right;font:23.08px/33px 'Liberation Mono', monospace;color:#858585;white-space:pre">67</div>
<div style="position:absolute;left:441px;top:759.3px;height:33px;font:23.08px/33px 'Liberation Mono', monospace;white-space:pre;letter-spacing:0.002px;-webkit-text-stroke:0.3px"><span style="color:#569cd6">int</span><span style="color:#d4d4d4"> </span><span style="color:#dcdcaa">main</span><span style="color:#d4d4d4">() {</span></div>
<div style="position:absolute;left:340px;top:792.3px;width:62px;height:33px;line-height:33px;text-align:right;font:23.08px/33px 'Liberation Mono', monospace;color:#858585;white-space:pre">68</div>
<div style="position:absolute;left:441px;top:792.3px;height:33px;font:23.08px/33px 'Liberation Mono', monospace;white-space:pre;letter-spacing:0.002px;-webkit-text-stroke:0.3px"><span style="color:#d4d4d4">    </span><span style="color:#569cd6">int</span><span style="color:#d4d4d4"> </span><span style="color:#9cdcfe">testcase</span><span style="color:#d4d4d4">;</span></div>
<div style="position:absolute;left:340px;top:825.3px;width:62px;height:33px;line-height:33px;text-align:right;font:23.08px/33px 'Liberation Mono', monospace;color:#858585;white-space:pre">69</div>
<div style="position:absolute;left:441px;top:825.3px;height:33px;font:23.08px/33px 'Liberation Mono', monospace;white-space:pre;letter-spacing:0.002px;-webkit-text-stroke:0.3px"><span style="color:#d4d4d4">    </span><span style="color:#9cdcfe">cin</span><span style="color:#d4d4d4">&gt;&gt;</span><span style="color:#9cdcfe">testcase</span><span style="color:#d4d4d4">;</span></div>
<div style="position:absolute;left:340px;top:858.3px;width:62px;height:33px;line-height:33px;text-align:right;font:23.08px/33px 'Liberation Mono', monospace;color:#858585;white-space:pre">70</div>
<div style="position:absolute;left:441px;top:858.3px;height:33px;font:23.08px/33px 'Liberation Mono', monospace;white-space:pre;letter-spacing:0.002px;-webkit-text-stroke:0.3px"><span style="color:#d4d4d4">    </span><span style="color:#c586c0">while</span><span style="color:#d4d4d4">(</span><span style="color:#9cdcfe">testcase</span><span style="color:#d4d4d4">!=</span><span style="color:#b5cea8">0</span><span style="color:#d4d4d4">){</span></div>
<div style="position:absolute;left:340px;top:891.3px;width:62px;height:33px;line-height:33px;text-align:right;font:23.08px/33px 'Liberation Mono', monospace;color:#858585;white-space:pre">71</div>
<div style="position:absolute;left:441px;top:891.3px;height:33px;font:23.08px/33px 'Liberation Mono', monospace;white-space:pre;letter-spacing:0.002px;-webkit-text-stroke:0.3px"><span style="color:#d4d4d4">        </span><span style="color:#dcdcaa">circulararray</span><span style="color:#d4d4d4">();  </span><span style="color:#9cdcfe">testcase</span><span style="color:#d4d4d4">--;</span></div>
<div style="position:absolute;left:340px;top:924.3px;width:62px;height:33px;line-height:33px;text-align:right;font:23.08px/33px 'Liberation Mono', monospace;color:#c6c6c6;white-space:pre">72</div>
<div style="position:absolute;left:441px;top:924.3px;height:33px;font:23.08px/33px 'Liberation Mono', monospace;white-space:pre;letter-spacing:0.002px;-webkit-text-stroke:0.3px"><span style="color:#d4d4d4">    }  </span><span style="color:#c586c0">return</span><span style="color:#d4d4d4"> </span><span style="color:#b5cea8">0</span><span style="color:#d4d4d4">;</span></div>
<div style="position:absolute;left:340px;top:957.3px;width:62px;height:33px;line-height:33px;text-align:right;font:23.08px/33px 'Liberation Mono', monospace;color:#858585;white-space:pre">73</div>
<div style="position:absolute;left:441px;top:957.3px;height:33px;font:23.08px/33px 'Liberation Mono', monospace;white-space:pre;letter-spacing:0.002px;-webkit-text-stroke:0.3px"><span style="color:#d4d4d4">}</span></div>
<svg style="position:absolute;left:0;top:0" width="1920" height="1080"><rect x="1798" y="273" width="101" height="2" fill="#264f78" opacity="0.65"/><rect x="1798" y="131" width="2" height="1.6" fill="#6a9955" opacity="0.45"/><rect x="1801" y="131" width="4" height="1.6" fill="#6a9955" opacity="0.35"/><rect x="1806" y="131" width="5" height="1.6" fill="#6a9955" opacity="0.55"/><rect x="1812" y="131" width="2" height="1.6" fill="#6a9955" opacity="0.35"/><rect x="1815" y="131" width="4" height="1.6" fill="#6a9955" opacity="0.35"/><rect x="1798" y="133" width="2" height="1.6" fill="#6a9955" opacity="0.45"/><rect x="1801" y="133" width="4" height="1.6" fill="#6a9955" opacity="0.55"/><rect x="1806" y="133" width="2" height="1.6" fill="#6a9955" opacity="0.55"/><rect x="1809" y="133" width="3" height="1.6" fill="#6a9955" opacity="0.35"/><rect x="1813" y="133" width="2" height="1.6" fill="#6a9955" opacity="0.45"/><rect x="1816" y="133" width="1" height="1.6" fill="#6a9955" opacity="0.35"/><rect x="1798" y="135" width="2" height="1.6" fill="#6a9955" opacity="0.45"/><rect x="1801" y="135" width="3" height="1.6" fill="#6a9955" opacity="0.35"/><rect x="1805" y="135" width="6" height="1.6" fill="#6a9955" opacity="0.45"/><rect x="1812" y="135" width="2" height="1.6" fill="#6a9955" opacity="0.55"/><rect x="1815" y="135" width="2" height="1.6" fill="#6a9955" opacity="0.35"/><rect x="1818" y="135" width="2" height="1.6" fill="#6a9955" opacity="0.55"/><rect x="1798" y="137" width="2" height="1.6" fill="#6a9955" opacity="0.45"/><rect x="1801" y="137" width="6" height="1.6" fill="#6a9955" opacity="0.35"/><rect x="1808" y="137" width="5" height="1.6" fill="#6a9955" opacity="0.55"/><rect x="1798" y="139" width="2" height="1.6" fill="#6a9955" opacity="0.45"/><rect x="1802" y="139" width="5" height="1.6" fill="#6a9955" opacity="0.35"/><rect x="1798" y="141" width="2" height="1.6" fill="#6a9955" opacity="0.45"/><rect x="1802" y="141" width="3" height="1.6" fill="#6a9955" opacity="0.35"/><rect x="1806" y="141" width="2" height="1.6" fill="#6a9955" opacity="0.35"/><rect x="1798" y="143" width="2" height="1.6" fill="#6a9955" opacity="0.45"/><rect x="1802" y="143" width="4" height="1.6" fill="#6a9955" opacity="0.45"/><rect x="1807" y="143" width="3" height="1.6" fill="#6a9955" opacity="0.55"/><rect x="1798" y="145" width="2" height="1.6" fill="#6a9955" opacity="0.45"/><rect x="1805" y="145" width="2" height="1.6" fill="#6a9955" opacity="0.55"/><rect x="1808" y="145" width="4" height="1.6" fill="#6a9955" opacity="0.55"/><rect x="1813" y="145" width="4" height="1.6" fill="#6a9955" opacity="0.35"/><rect x="1798" y="147" width="2" height="1.6" fill="#6a9955" opacity="0.45"/><rect x="1802" y="147" width="2" height="1.6" fill="#6a9955" opacity="0.55"/><rect x="1805" y="147" width="6" height="1.6" fill="#6a9955" opacity="0.55"/><rect x="1812" y="147" width="3" height="1.6" fill="#6a9955" opacity="0.45"/><rect x="1816" y="147" width="2" height="1.6" fill="#6a9955" opacity="0.55"/><rect x="1819" y="147" width="4" height="1.6" fill="#6a9955" opacity="0.35"/><rect x="1798" y="149" width="2" height="1.6" fill="#6a9955" opacity="0.45"/><rect x="1806" y="149" width="6" height="1.6" fill="#6a9955" opacity="0.35"/><rect x="1813" y="149" width="3" height="1.6" fill="#6a9955" opacity="0.35"/><rect x="1798" y="151" width="2" height="1.6" fill="#6a9955" opacity="0.45"/><rect x="1802" y="151" width="1" height="1.6" fill="#6a9955" opacity="0.55"/><rect x="1798" y="155" width="2" height="1.6" fill="#6a9955" opacity="0.45"/><rect x="1802" y="155" width="6" height="1.6" fill="#6a9955" opacity="0.45"/><rect x="1798" y="157" width="2" height="1.6" fill="#6a9955" opacity="0.45"/><rect x="1802" y="157" width="4" height="1.6" fill="#6a9955" opacity="0.45"/><rect x="1807" y="157" width="2" height="1.6" fill="#6a9955" opacity="0.45"/><rect x="1798" y="159" width="2" height="1.6" fill="#6a9955" opacity="0.45"/><rect x="1802" y="159" width="4" height="1.6" fill="#6a9955" opacity="0.45"/><rect x="1807" y="159" width="3" height="1.6" fill="#6a9955" opacity="0.35"/><rect x="1798" y="161" width="2" height="1.6" fill="#6a9955" opacity="0.45"/><rect x="1802" y="161" width="7" height="1.6" fill="#6a9955" opacity="0.35"/><rect x="1810" y="161" width="2" height="1.6" fill="#6a9955" opacity="0.55"/><rect x="1813" y="161" width="4" height="1.6" fill="#6a9955" opacity="0.55"/><rect x="1818" y="161" width="5" height="1.6" fill="#6a9955" opacity="0.45"/><rect x="1798" y="163" width="2" height="1.6" fill="#6a9955" opacity="0.45"/><rect x="1806" y="163" width="7" height="1.6" fill="#6a9955" opacity="0.45"/><rect x="1814" y="163" width="2" height="1.6" fill="#6a9955" opacity="0.55"/><rect x="1798" y="165" width="2" height="1.6" fill="#6a9955" opacity="0.45"/><rect x="1802" y="165" width="1" height="1.6" fill="#6a9955" opacity="0.35"/><rect x="1798" y="169" width="2" height="1.6" fill="#6a9955" opacity="0.45"/><rect x="1802" y="169" width="6" height="1.6" fill="#6a9955" opacity="0.45"/><rect x="1809" y="169" width="3" height="1.6" fill="#6a9955" opacity="0.45"/><rect x="1813" y="169" width="3" height="1.6" fill="#6a9955" opacity="0.45"/><rect x="1817" y="169" width="5" height="1.6" fill="#6a9955" opacity="0.35"/><rect x="1823" y="169" width="1" height="1.6" fill="#6a9955" opacity="0.35"/><rect x="1798" y="171" width="2" height="1.6" fill="#6a9955" opacity="0.45"/><rect x="1806" y="171" width="6" height="1.6" fill="#6a9955" opacity="0.55"/><rect x="1813" y="171" width="3" height="1.6" fill="#6a9955" opacity="0.45"/><rect x="1798" y="175" width="2" height="1.6" fill="#6a9955" opacity="0.45"/><rect x="1806" y="175" width="7" height="1.6" fill="#6a9955" opacity="0.45"/><rect x="1814" y="175" width="6" height="1.6" fill="#6a9955" opacity="0.45"/><rect x="1821" y="175" width="6" height="1.6" fill="#6a9955" opacity="0.45"/><rect x="1798" y="177" width="2" height="1.6" fill="#6a9955" opacity="0.45"/><rect x="1810" y="177" width="2" height="1.6" fill="#6a9955" opacity="0.35"/><rect x="1813" y="177" width="4" height="1.6" fill="#6a9955" opacity="0.45"/><rect x="1818" y="177" width="4" height="1.6" fill="#6a9955" opacity="0.55"/><rect x="1798" y="179" width="2" height="1.6" fill="#6a9955" opacity="0.45"/><rect x="1814" y="179" width="2" height="1.6" fill="#6a9955" opacity="0.35"/><rect x="1817" y="179" width="7" height="1.6" fill="#6a9955" opacity="0.55"/><rect x="1825" y="179" width="4" height="1.6" fill="#6a9955" opacity="0.55"/><rect x="1830" y="179" width="3" height="1.6" fill="#6a9955" opacity="0.55"/><rect x="1798" y="181" width="2" height="1.6" fill="#6a9955" opacity="0.45"/><rect x="1810" y="181" width="1" height="1.6" fill="#6a9955" opacity="0.45"/><rect x="1798" y="183" width="2" height="1.6" fill="#6a9955" opacity="0.45"/><rect x="1810" y="183" width="4" height="1.6" fill="#6a9955" opacity="0.45"/><rect x="1798" y="185" width="2" height="1.6" fill="#6a9955" opacity="0.45"/><rect x="1810" y="185" width="7" height="1.6" fill="#6a9955" opacity="0.45"/><rect x="1818" y="185" width="2" height="1.6" fill="#6a9955" opacity="0.45"/><rect x="1821" y="185" width="4" height="1.6" fill="#6a9955" opacity="0.35"/><rect x="1826" y="185" width="1" height="1.6" fill="#6a9955" opacity="0.35"/><rect x="1798" y="187" width="2" height="1.6" fill="#6a9955" opacity="0.45"/><rect x="1806" y="187" width="1" height="1.6" fill="#6a9955" opacity="0.35"/><rect x="1798" y="189" width="2" height="1.6" fill="#6a9955" opacity="0.45"/><rect x="1809" y="189" width="3" height="1.6" fill="#6a9955" opacity="0.45"/><rect x="1813" y="189" width="3" height="1.6" fill="#6a9955" opacity="0.55"/><rect x="1817" y="189" width="3" height="1.6" fill="#6a9955" opacity="0.45"/><rect x="1821" y="189" width="5" height="1.6" fill="#6a9955" opacity="0.45"/><rect x="1827" y="189" width="2" height="1.6" fill="#6a9955" opacity="0.35"/><rect x="1798" y="191" width="2" height="1.6" fill="#6a9955" opacity="0.45"/><rect x="1813" y="191" width="5" height="1.6" fill="#6a9955" opacity="0.45"/><rect x="1819" y="191" width="4" height="1.6" fill="#6a9955" opacity="0.45"/><rect x="1798" y="193" width="2" height="1.6" fill="#6a9955" opacity="0.45"/><rect x="1809" y="193" width="1" height="1.6" fill="#6a9955" opacity="0.45"/><rect x="1798" y="195" width="2" height="1.6" fill="#6a9955" opacity="0.45"/><rect x="1802" y="195" width="1" height="1.6" fill="#6a9955" opacity="0.45"/><rect x="1798" y="197" width="2" height="1.6" fill="#6a9955" opacity="0.45"/><rect x="1802" y="197" width="7" height="1.6" fill="#6a9955" opacity="0.45"/><rect x="1810" y="197" width="2" height="1.6" fill="#6a9955" opacity="0.55"/><rect x="1798" y="199" width="2" height="1.6" fill="#6a9955" opacity="0.45"/><rect x="1801" y="199" width="5" height="1.6" fill="#6a9955" opacity="0.35"/><rect x="1807" y="199" width="3" height="1.6" fill="#6a9955" opacity="0.35"/><rect x="1811" y="199" width="3" height="1.6" fill="#6a9955" opacity="0.35"/><rect x="1815" y="199" width="3" height="1.6" fill="#6a9955" opacity="0.55"/><rect x="1819" y="199" width="3" height="1.6" fill="#6a9955" opacity="0.35"/><rect x="1798" y="203" width="2" height="1.6" fill="#6a9955" opacity="0.45"/><rect x="1802" y="203" width="5" height="1.6" fill="#6a9955" opacity="0.55"/><rect x="1808" y="203" width="3" height="1.6" fill="#6a9955" opacity="0.45"/><rect x="1798" y="205" width="2" height="1.6" fill="#6a9955" opacity="0.45"/><rect x="1801" y="205" width="1" height="1.6" fill="#6a9955" opacity="0.35"/><rect x="1798" y="209" width="2" height="1.6" fill="#6a9955" opacity="0.45"/><rect x="1801" y="209" width="3" height="1.6" fill="#6a9955" opacity="0.45"/><rect x="1805" y="209" width="6" height="1.6" fill="#6a9955" opacity="0.45"/><rect x="1812" y="209" width="6" height="1.6" fill="#6a9955" opacity="0.55"/><rect x="1819" y="209" width="3" height="1.6" fill="#6a9955" opacity="0.35"/><rect x="1798" y="211" width="2" height="1.6" fill="#6a9955" opacity="0.45"/><rect x="1801" y="211" width="7" height="1.6" fill="#6a9955" opacity="0.55"/><rect x="1809" y="211" width="6" height="1.6" fill="#6a9955" opacity="0.55"/><rect x="1816" y="211" width="1" height="1.6" fill="#6a9955" opacity="0.55"/><rect x="1798" y="215" width="2" height="1.6" fill="#6a9955" opacity="0.45"/><rect x="1802" y="215" width="2" height="1.6" fill="#6a9955" opacity="0.45"/><rect x="1805" y="215" width="6" height="1.6" fill="#6a9955" opacity="0.55"/><rect x="1798" y="217" width="2" height="1.6" fill="#6a9955" opacity="0.45"/><rect x="1801" y="217" width="1" height="1.6" fill="#6a9955" opacity="0.45"/><rect x="1798" y="221" width="8" height="1.6" fill="#c586c0" opacity="0.6"/><rect x="1806" y="221" width="10" height="1.6" fill="#ce9178" opacity="0.5"/><rect x="1798" y="223" width="8" height="1.6" fill="#c586c0" opacity="0.6"/><rect x="1806" y="223" width="10" height="1.6" fill="#ce9178" opacity="0.5"/><rect x="1798" y="225" width="1" height="1.5" fill="#c586c0" opacity="0.45"/><rect x="1799" y="225" width="1" height="1.5" fill="#c586c0" opacity="0.45"/><rect x="1800" y="225" width="1" height="1.5" fill="#c586c0" opacity="0.45"/><rect x="1801" y="225" width="1" height="1.5" fill="#c586c0" opacity="0.45"/><rect x="1802" y="225" width="1" height="1.5" fill="#c586c0" opacity="0.45"/><rect x="1804" y="225" width="1" height="1.5" fill="#569cd6" opacity="0.45"/><rect x="1805" y="225" width="1" height="1.5" fill="#569cd6" opacity="0.45"/><rect x="1806" y="225" width="1" height="1.5" fill="#569cd6" opacity="0.45"/><rect x="1807" y="225" width="1" height="1.5" fill="#569cd6" opacity="0.45"/><rect x="1808" y="225" width="1" height="1.5" fill="#569cd6" opacity="0.45"/><rect x="1809" y="225" width="1" height="1.5" fill="#569cd6" opacity="0.45"/><rect x="1810" y="225" width="1" height="1.5" fill="#569cd6" opacity="0.45"/><rect x="1811" y="225" width="1" height="1.5" fill="#569cd6" opacity="0.45"/><rect x="1812" y="225" width="1" height="1.5" fill="#569cd6" opacity="0.45"/><rect x="1814" y="225" width="1" height="1.5" fill="#4ec9b0" opacity="0.45"/><rect x="1815" y="225" width="1" height="1.5" fill="#4ec9b0" opacity="0.45"/><rect x="1816" y="225" width="1" height="1.5" fill="#4ec9b0" opacity="0.45"/><rect x="1817" y="225" width="1" height="1.5" fill="#d4d4d4" opacity="0.45"/><rect x="1798" y="227" width="1" height="1.5" fill="#569cd6" opacity="0.45"/><rect x="1799" y="227" width="1" height="1.5" fill="#569cd6" opacity="0.45"/><rect x="1800" y="227" width="1" height="1.5" fill="#569cd6" opacity="0.45"/><rect x="1801" y="227" width="1" height="1.5" fill="#569cd6" opacity="0.45"/><rect x="1803" y="227" width="1" height="1.5" fill="#dcdcaa" opacity="0.45"/><rect x="1804" y="227" width="1" height="1.5" fill="#dcdcaa" opacity="0.45"/><rect x="1805" y="227" width="1" height="1.5" fill="#dcdcaa" opacity="0.45"/><rect x="1806" y="227" width="1" height="1.5" fill="#dcdcaa" opacity="0.45"/><rect x="1807" y="227" width="1" height="1.5" fill="#dcdcaa" opacity="0.45"/><rect x="1808" y="227" width="1" height="1.5" fill="#dcdcaa" opacity="0.45"/><rect x="1809" y="227" width="1" height="1.5" fill="#dcdcaa" opacity="0.45"/><rect x="1810" y="227" width="1" height="1.5" fill="#dcdcaa" opacity="0.45"/><rect x="1811" y="227" width="1" height="1.5" fill="#dcdcaa" opacity="0.45"/><rect x="1812" y="227" width="1" height="1.5" fill="#dcdcaa" opacity="0.45"/><rect x="1813" y="227" width="1" height="1.5" fill="#dcdcaa" opacity="0.45"/><rect x="1814" y="227" width="1" height="1.5" fill="#dcdcaa" opacity="0.45"/><rect x="1815" y="227" width="1" height="1.5" fill="#dcdcaa" opacity="0.45"/><rect x="1816" y="227" width="1" height="1.5" fill="#d4d4d4" opacity="0.45"/><rect x="1817" y="227" width="1" height="1.5" fill="#d4d4d4" opacity="0.45"/><rect x="1818" y="227" width="1" height="1.5" fill="#d4d4d4" opacity="0.45"/><rect x="1798" y="229" width="1" height="1.5" fill="#569cd6" opacity="0.45"/><rect x="1799" y="229" width="1" height="1.5" fill="#569cd6" opacity="0.45"/><rect x="1800" y="229" width="1" height="1.5" fill="#569cd6" opacity="0.45"/><rect x="1802" y="229" width="1" height="1.5" fill="#9cdcfe" opacity="0.45"/><rect x="1803" y="229" width="1" height="1.5" fill="#d4d4d4" opacity="0.45"/><rect x="1802" y="231" width="1" height="1.5" fill="#9cdcfe" opacity="0.45"/><rect x="1803" y="231" width="1" height="1.5" fill="#9cdcfe" opacity="0.45"/><rect x="1804" y="231" width="1" height="1.5" fill="#9cdcfe" opacity="0.45"/><rect x="1805" y="231" width="1" height="1.5" fill="#d4d4d4" opacity="0.45"/><rect x="1806" y="231" width="1" height="1.5" fill="#d4d4d4" opacity="0.45"/><rect x="1807" y="231" width="1" height="1.5" fill="#9cdcfe" opacity="0.45"/><rect x="1808" y="231" width="1" height="1.5" fill="#d4d4d4" opacity="0.45"/><rect x="1802" y="233" width="1" height="1.5" fill="#569cd6" opacity="0.45"/><rect x="1803" y="233" width="1" height="1.5" fill="#569cd6" opacity="0.45"/><rect x="1804" y="233" width="1" height="1.5" fill="#569cd6" opacity="0.45"/><rect x="1806" y="233" width="1" height="1.5" fill="#9cdcfe" opacity="0.45"/><rect x="1807" y="233" width="1" height="1.5" fill="#9cdcfe" opacity="0.45"/><rect x="1808" y="233" width="1" height="1.5" fill="#9cdcfe" opacity="0.45"/><rect x="1809" y="233" width="1" height="1.5" fill="#9cdcfe" opacity="0.45"/><rect x="1810" y="233" width="1" height="1.5" fill="#d4d4d4" opacity="0.45"/><rect x="1811" y="233" width="1" height="1.5" fill="#d4d4d4" opacity="0.45"/><rect x="1812" y="233" width="1" height="1.5" fill="#b5cea8" opacity="0.45"/><rect x="1813" y="233" width="1" height="1.5" fill="#d4d4d4" opacity="0.45"/><rect x="1814" y="233" width="1" height="1.5" fill="#9cdcfe" opacity="0.45"/><rect x="1815" y="233" width="1" height="1.5" fill="#d4d4d4" opacity="0.45"/><rect x="1816" y="233" width="1" height="1.5" fill="#d4d4d4" opacity="0.45"/><rect x="1817" y="233" width="1" height="1.5" fill="#b5cea8" opacity="0.45"/><rect x="1818" y="233" width="1" height="1.5" fill="#d4d4d4" opacity="0.45"/><rect x="1802" y="235" width="1" height="1.5" fill="#569cd6" opacity="0.45"/><rect x="1803" y="235" width="1" height="1.5" fill="#569cd6" opacity="0.45"/><rect x="1804" y="235" width="1" height="1.5" fill="#569cd6" opacity="0.45"/><rect x="1806" y="235" width="1" height="1.5" fill="#9cdcfe" opacity="0.45"/><rect x="1807" y="235" width="1" height="1.5" fill="#d4d4d4" opacity="0.45"/><rect x="1808" y="235" width="1" height="1.5" fill="#9cdcfe" opacity="0.45"/><rect x="1809" y="235" width="1" height="1.5" fill="#9cdcfe" opacity="0.45"/><rect x="1810" y="235" width="1" height="1.5" fill="#9cdcfe" opacity="0.45"/><rect x="1811" y="235" width="1" height="1.5" fill="#9cdcfe" opacity="0.45"/><rect x="1812" y="235" width="1" height="1.5" fill="#d4d4d4" opacity="0.45"/><rect x="1813" y="235" width="1" height="1.5" fill="#d4d4d4" opacity="0.45"/><rect x="1802" y="237" width="1" height="1.5" fill="#c586c0" opacity="0.45"/><rect x="1803" y="237" width="1" height="1.5" fill="#c586c0" opacity="0.45"/><rect x="1804" y="237" width="1" height="1.5" fill="#c586c0" opacity="0.45"/><rect x="1805" y="237" width="1" height="1.5" fill="#d4d4d4" opacity="0.45"/><rect x="1806" y="237" width="1" height="1.5" fill="#569cd6" opacity="0.45"/><rect x="1807" y="237" width="1" height="1.5" fill="#569cd6" opacity="0.45"/><rect x="1808" y="237" width="1" height="1.5" fill="#569cd6" opacity="0.45"/><rect x="1810" y="237" width="1" height="1.5" fill="#9cdcfe" opacity="0.45"/><rect x="1811" y="237" width="1" height="1.5" fill="#d4d4d4" opacity="0.45"/><rect x="1812" y="237" width="1" height="1.5" fill="#b5cea8" opacity="0.45"/><rect x="1813" y="237" width="1" height="1.5" fill="#d4d4d4" opacity="0.45"/><rect x="1814" y="237" width="1" height="1.5" fill="#9cdcfe" opacity="0.45"/><rect x="1815" y="237" width="1" height="1.5" fill="#d4d4d4" opacity="0.45"/><rect x="1816" y="237" width="1" height="1.5" fill="#9cdcfe" opacity="0.45"/><rect x="1817" y="237" width="1" height="1.5" fill="#d4d4d4" opacity="0.45"/><rect x="1818" y="237" width="1" height="1.5" fill="#9cdcfe" opacity="0.45"/><rect x="1819" y="237" width="1" height="1.5" fill="#d4d4d4" opacity="0.45"/><rect x="1820" y="237" width="1" height="1.5" fill="#d4d4d4" opacity="0.45"/><rect x="1821" y="237" width="1" height="1.5" fill="#d4d4d4" opacity="0.45"/><rect x="1822" y="237" width="1" height="1.5" fill="#d4d4d4" opacity="0.45"/><rect x="1806" y="239" width="1" height="1.5" fill="#9cdcfe" opacity="0.45"/><rect x="1807" y="239" width="1" height="1.5" fill="#9cdcfe" opacity="0.45"/><rect x="1808" y="239" width="1" height="1.5" fill="#9cdcfe" opacity="0.45"/><rect x="1809" y="239" width="1" height="1.5" fill="#d4d4d4" opacity="0.45"/><rect x="1810" y="239" width="1" height="1.5" fill="#d4d4d4" opacity="0.45"/><rect x="1811" y="239" width="1" height="1.5" fill="#9cdcfe" opacity="0.45"/><rect x="1812" y="239" width="1" height="1.5" fill="#d4d4d4" opacity="0.45"/><rect x="1813" y="239" width="1" height="1.5" fill="#9cdcfe" opacity="0.45"/><rect x="1814" y="239" width="1" height="1.5" fill="#d4d4d4" opacity="0.45"/><rect x="1815" y="239" width="1" height="1.5" fill="#d4d4d4" opacity="0.45"/><rect x="1816" y="239" width="1" height="1.5" fill="#d4d4d4" opacity="0.45"/><rect x="1802" y="241" width="1" height="1.5" fill="#c586c0" opacity="0.45"/><rect x="1803" y="241" width="1" height="1.5" fill="#c586c0" opacity="0.45"/><rect x="1804" y="241" width="1" height="1.5" fill="#c586c0" opacity="0.45"/><rect x="1805" y="241" width="1" height="1.5" fill="#d4d4d4" opacity="0.45"/><rect x="1806" y="241" width="1" height="1.5" fill="#569cd6" opacity="0.45"/><rect x="1807" y="241" width="1" height="1.5" fill="#569cd6" opacity="0.45"/><rect x="1808" y="241" width="1" height="1.5" fill="#569cd6" opacity="0.45"/><rect x="1810" y="241" width="1" height="1.5" fill="#9cdcfe" opacity="0.45"/><rect x="1811" y="241" width="1" height="1.5" fill="#d4d4d4" opacity="0.45"/><rect x="1812" y="241" width="1" height="1.5" fill="#9cdcfe" opacity="0.45"/><rect x="1813" y="241" width="1" height="1.5" fill="#d4d4d4" opacity="0.45"/><rect x="1814" y="241" width="1" height="1.5" fill="#9cdcfe" opacity="0.45"/><rect x="1815" y="241" width="1" height="1.5" fill="#d4d4d4" opacity="0.45"/><rect x="1816" y="241" width="1" height="1.5" fill="#9cdcfe" opacity="0.45"/><rect x="1817" y="241" width="1" height="1.5" fill="#9cdcfe" opacity="0.45"/><rect x="1818" y="241" width="1" height="1.5" fill="#9cdcfe" opacity="0.45"/><rect x="1819" y="241" width="1" height="1.5" fill="#9cdcfe" opacity="0.45"/><rect x="1820" y="241" width="1" height="1.5" fill="#d4d4d4" opacity="0.45"/><rect x="1821" y="241" width="1" height="1.5" fill="#9cdcfe" opacity="0.45"/><rect x="1822" y="241" width="1" height="1.5" fill="#d4d4d4" opacity="0.45"/><rect x="1823" y="241" width="1" height="1.5" fill="#d4d4d4" opacity="0.45"/><rect x="1824" y="241" width="1" height="1.5" fill="#d4d4d4" opacity="0.45"/><rect x="1825" y="241" width="1" height="1.5" fill="#d4d4d4" opacity="0.45"/><rect x="1806" y="243" width="1" height="1.5" fill="#9cdcfe" opacity="0.45"/><rect x="1807" y="243" width="1" height="1.5" fill="#d4d4d4" opacity="0.45"/><rect x="1808" y="243" width="1" height="1.5" fill="#9cdcfe" opacity="0.45"/><rect x="1809" y="243" width="1" height="1.5" fill="#d4d4d4" opacity="0.45"/><rect x="1810" y="243" width="1" height="1.5" fill="#d4d4d4" opacity="0.45"/><rect x="1811" y="243" width="1" height="1.5" fill="#9cdcfe" opacity="0.45"/><rect x="1812" y="243" width="1" height="1.5" fill="#d4d4d4" opacity="0.45"/><rect x="1813" y="243" width="1" height="1.5" fill="#9cdcfe" opacity="0.45"/><rect x="1814" y="243" width="1" height="1.5" fill="#d4d4d4" opacity="0.45"/><rect x="1815" y="243" width="1" height="1.5" fill="#9cdcfe" opacity="0.45"/><rect x="1816" y="243" width="1" height="1.5" fill="#d4d4d4" opacity="0.45"/><rect x="1817" y="243" width="1" height="1.5" fill="#d4d4d4" opacity="0.45"/><rect x="1818" y="243" width="1" height="1.5" fill="#d4d4d4" opacity="0.45"/><rect x="1798" y="245" width="1" height="1.5" fill="#569cd6" opacity="0.45"/><rect x="1799" y="245" width="1" height="1.5" fill="#569cd6" opacity="0.45"/><rect x="1800" y="245" width="1" height="1.5" fill="#569cd6" opacity="0.45"/><rect x="1802" y="245" width="1" height="1.5" fill="#9cdcfe" opacity="0.45"/><rect x="1803" y="245" width="1" height="1.5" fill="#9cdcfe" opacity="0.45"/><rect x="1804" y="245" width="1" height="1.5" fill="#9cdcfe" opacity="0.45"/><rect x="1805" y="245" width="1" height="1.5" fill="#d4d4d4" opacity="0.45"/><rect x="1806" y="245" width="1" height="1.5" fill="#569cd6" opacity="0.45"/><rect x="1807" y="245" width="1" height="1.5" fill="#569cd6" opacity="0.45"/><rect x="1808" y="245" width="1" height="1.5" fill="#569cd6" opacity="0.45"/><rect x="1809" y="245" width="1" height="1.5" fill="#569cd6" opacity="0.45"/><rect x="1810" y="245" width="1" height="1.5" fill="#569cd6" opacity="0.45"/><rect x="1811" y="245" width="1" height="1.5" fill="#569cd6" opacity="0.45"/><rect x="1812" y="245" width="1" height="1.5" fill="#569cd6" opacity="0.45"/><rect x="1813" y="245" width="1" height="1.5" fill="#d4d4d4" opacity="0.45"/><rect x="1798" y="247" width="1" height="1.5" fill="#c586c0" opacity="0.45"/><rect x="1799" y="247" width="1" height="1.5" fill="#c586c0" opacity="0.45"/><rect x="1800" y="247" width="1" height="1.5" fill="#c586c0" opacity="0.45"/><rect x="1801" y="247" width="1" height="1.5" fill="#d4d4d4" opacity="0.45"/><rect x="1802" y="247" width="1" height="1.5" fill="#569cd6" opacity="0.45"/><rect x="1803" y="247" width="1" height="1.5" fill="#569cd6" opacity="0.45"/><rect x="1804" y="247" width="1" height="1.5" fill="#569cd6" opacity="0.45"/><rect x="1806" y="247" width="1" height="1.5" fill="#9cdcfe" opacity="0.45"/><rect x="1807" y="247" width="1" height="1.5" fill="#d4d4d4" opacity="0.45"/><rect x="1808" y="247" width="1" height="1.5" fill="#b5cea8" opacity="0.45"/><rect x="1809" y="247" width="1" height="1.5" fill="#d4d4d4" opacity="0.45"/><rect x="1810" y="247" width="1" height="1.5" fill="#9cdcfe" opacity="0.45"/><rect x="1811" y="247" width="1" height="1.5" fill="#d4d4d4" opacity="0.45"/><rect x="1812" y="247" width="1" height="1.5" fill="#9cdcfe" opacity="0.45"/><rect x="1813" y="247" width="1" height="1.5" fill="#9cdcfe" opacity="0.45"/><rect x="1814" y="247" width="1" height="1.5" fill="#9cdcfe" opacity="0.45"/><rect x="1815" y="247" width="1" height="1.5" fill="#9cdcfe" opacity="0.45"/><rect x="1816" y="247" width="1" height="1.5" fill="#d4d4d4" opacity="0.45"/><rect x="1817" y="247" width="1" height="1.5" fill="#9cdcfe" opacity="0.45"/><rect x="1818" y="247" width="1" height="1.5" fill="#d4d4d4" opacity="0.45"/><rect x="1819" y="247" width="1" height="1.5" fill="#d4d4d4" opacity="0.45"/><rect x="1820" y="247" width="1" height="1.5" fill="#d4d4d4" opacity="0.45"/><rect x="1821" y="247" width="1" height="1.5" fill="#d4d4d4" opacity="0.45"/><rect x="1802" y="249" width="1" height="1.5" fill="#c586c0" opacity="0.45"/><rect x="1803" y="249" width="1" height="1.5" fill="#c586c0" opacity="0.45"/><rect x="1804" y="249" width="1" height="1.5" fill="#c586c0" opacity="0.45"/><rect x="1805" y="249" width="1" height="1.5" fill="#d4d4d4" opacity="0.45"/><rect x="1806" y="249" width="1" height="1.5" fill="#569cd6" opacity="0.45"/><rect x="1807" y="249" width="1" height="1.5" fill="#569cd6" opacity="0.45"/><rect x="1808" y="249" width="1" height="1.5" fill="#569cd6" opacity="0.45"/><rect x="1810" y="249" width="1" height="1.5" fill="#9cdcfe" opacity="0.45"/><rect x="1811" y="249" width="1" height="1.5" fill="#d4d4d4" opacity="0.45"/><rect x="1812" y="249" width="1" height="1.5" fill="#9cdcfe" opacity="0.45"/><rect x="1813" y="249" width="1" height="1.5" fill="#d4d4d4" opacity="0.45"/><rect x="1814" y="249" width="1" height="1.5" fill="#9cdcfe" opacity="0.45"/><rect x="1815" y="249" width="1" height="1.5" fill="#d4d4d4" opacity="0.45"/><rect x="1816" y="249" width="1" height="1.5" fill="#9cdcfe" opacity="0.45"/><rect x="1817" y="249" width="1" height="1.5" fill="#9cdcfe" opacity="0.45"/><rect x="1818" y="249" width="1" height="1.5" fill="#9cdcfe" opacity="0.45"/><rect x="1819" y="249" width="1" height="1.5" fill="#9cdcfe" opacity="0.45"/><rect x="1820" y="249" width="1" height="1.5" fill="#d4d4d4" opacity="0.45"/><rect x="1821" y="249" width="1" height="1.5" fill="#9cdcfe" opacity="0.45"/><rect x="1822" y="249" width="1" height="1.5" fill="#d4d4d4" opacity="0.45"/><rect x="1823" y="249" width="1" height="1.5" fill="#d4d4d4" opacity="0.45"/><rect x="1824" y="249" width="1" height="1.5" fill="#d4d4d4" opacity="0.45"/><rect x="1825" y="249" width="1" height="1.5" fill="#d4d4d4" opacity="0.45"/><rect x="1806" y="251" width="1" height="1.5" fill="#569cd6" opacity="0.45"/><rect x="1807" y="251" width="1" height="1.5" fill="#569cd6" opacity="0.45"/><rect x="1808" y="251" width="1" height="1.5" fill="#569cd6" opacity="0.45"/><rect x="1810" y="251" width="1" height="1.5" fill="#9cdcfe" opacity="0.45"/><rect x="1811" y="251" width="1" height="1.5" fill="#9cdcfe" opacity="0.45"/><rect x="1812" y="251" width="1" height="1.5" fill="#9cdcfe" opacity="0.45"/><rect x="1813" y="251" width="1" height="1.5" fill="#d4d4d4" opacity="0.45"/><rect x="1814" y="251" width="1" height="1.5" fill="#b5cea8" opacity="0.45"/><rect x="1815" y="251" width="1" height="1.5" fill="#d4d4d4" opacity="0.45"/><rect x="1806" y="253" width="1" height="1.5" fill="#c586c0" opacity="0.45"/><rect x="1807" y="253" width="1" height="1.5" fill="#c586c0" opacity="0.45"/><rect x="1808" y="253" width="1" height="1.5" fill="#c586c0" opacity="0.45"/><rect x="1809" y="253" width="1" height="1.5" fill="#d4d4d4" opacity="0.45"/><rect x="1810" y="253" width="1" height="1.5" fill="#569cd6" opacity="0.45"/><rect x="1811" y="253" width="1" height="1.5" fill="#569cd6" opacity="0.45"/><rect x="1812" y="253" width="1" height="1.5" fill="#569cd6" opacity="0.45"/><rect x="1814" y="253" width="1" height="1.5" fill="#9cdcfe" opacity="0.45"/><rect x="1815" y="253" width="1" height="1.5" fill="#d4d4d4" opacity="0.45"/><rect x="1816" y="253" width="1" height="1.5" fill="#9cdcfe" opacity="0.45"/><rect x="1817" y="253" width="1" height="1.5" fill="#d4d4d4" opacity="0.45"/><rect x="1818" y="253" width="1" height="1.5" fill="#9cdcfe" opacity="0.45"/><rect x="1819" y="253" width="1" height="1.5" fill="#d4d4d4" opacity="0.45"/><rect x="1820" y="253" width="1" height="1.5" fill="#d4d4d4" opacity="0.45"/><rect x="1821" y="253" width="1" height="1.5" fill="#9cdcfe" opacity="0.45"/><rect x="1822" y="253" width="1" height="1.5" fill="#d4d4d4" opacity="0.45"/><rect x="1823" y="253" width="1" height="1.5" fill="#9cdcfe" opacity="0.45"/><rect x="1824" y="253" width="1" height="1.5" fill="#d4d4d4" opacity="0.45"/><rect x="1825" y="253" width="1" height="1.5" fill="#d4d4d4" opacity="0.45"/><rect x="1826" y="253" width="1" height="1.5" fill="#d4d4d4" opacity="0.45"/><rect x="1827" y="253" width="1" height="1.5" fill="#d4d4d4" opacity="0.45"/><rect x="1810" y="255" width="1" height="1.5" fill="#9cdcfe" opacity="0.45"/><rect x="1811" y="255" width="1" height="1.5" fill="#9cdcfe" opacity="0.45"/><rect x="1812" y="255" width="1" height="1.5" fill="#9cdcfe" opacity="0.45"/><rect x="1813" y="255" width="1" height="1.5" fill="#d4d4d4" opacity="0.45"/><rect x="1814" y="255" width="1" height="1.5" fill="#d4d4d4" opacity="0.45"/><rect x="1815" y="255" width="1" height="1.5" fill="#9cdcfe" opacity="0.45"/><rect x="1816" y="255" width="1" height="1.5" fill="#d4d4d4" opacity="0.45"/><rect x="1817" y="255" width="1" height="1.5" fill="#9cdcfe" opacity="0.45"/><rect x="1818" y="255" width="1" height="1.5" fill="#d4d4d4" opacity="0.45"/><rect x="1819" y="255" width="1" height="1.5" fill="#d4d4d4" opacity="0.45"/><rect x="1810" y="257" width="1" height="1.5" fill="#c586c0" opacity="0.45"/><rect x="1811" y="257" width="1" height="1.5" fill="#c586c0" opacity="0.45"/><rect x="1812" y="257" width="1" height="1.5" fill="#d4d4d4" opacity="0.45"/><rect x="1813" y="257" width="1" height="1.5" fill="#9cdcfe" opacity="0.45"/><rect x="1814" y="257" width="1" height="1.5" fill="#9cdcfe" opacity="0.45"/><rect x="1815" y="257" width="1" height="1.5" fill="#9cdcfe" opacity="0.45"/><rect x="1816" y="257" width="1" height="1.5" fill="#d4d4d4" opacity="0.45"/><rect x="1817" y="257" width="1" height="1.5" fill="#9cdcfe" opacity="0.45"/><rect x="1818" y="257" width="1" height="1.5" fill="#9cdcfe" opacity="0.45"/><rect x="1819" y="257" width="1" height="1.5" fill="#9cdcfe" opacity="0.45"/><rect x="1820" y="257" width="1" height="1.5" fill="#d4d4d4" opacity="0.45"/><rect x="1821" y="257" width="1" height="1.5" fill="#d4d4d4" opacity="0.45"/><rect x="1823" y="257" width="1" height="1.5" fill="#9cdcfe" opacity="0.45"/><rect x="1824" y="257" width="1" height="1.5" fill="#9cdcfe" opacity="0.45"/><rect x="1825" y="257" width="1" height="1.5" fill="#9cdcfe" opacity="0.45"/><rect x="1826" y="257" width="1" height="1.5" fill="#d4d4d4" opacity="0.45"/><rect x="1827" y="257" width="1" height="1.5" fill="#9cdcfe" opacity="0.45"/><rect x="1828" y="257" width="1" height="1.5" fill="#9cdcfe" opacity="0.45"/><rect x="1829" y="257" width="1" height="1.5" fill="#9cdcfe" opacity="0.45"/><rect x="1830" y="257" width="1" height="1.5" fill="#d4d4d4" opacity="0.45"/><rect x="1833" y="257" width="1" height="1.5" fill="#d4d4d4" opacity="0.45"/><rect x="1835" y="257" width="1" height="1.5" fill="#d4d4d4" opacity="0.45"/><rect x="1837" y="257" width="1" height="1.5" fill="#d4d4d4" opacity="0.45"/><rect x="1838" y="257" width="1" height="1.5" fill="#d4d4d4" opacity="0.45"/><rect x="1839" y="257" width="1" height="1.5" fill="#9cdcfe" opacity="0.45"/><rect x="1840" y="257" width="1" height="1.5" fill="#9cdcfe" opacity="0.45"/><rect x="1841" y="257" width="1" height="1.5" fill="#9cdcfe" opacity="0.45"/><rect x="1842" y="257" width="1" height="1.5" fill="#9cdcfe" opacity="0.45"/><rect x="1843" y="257" width="1" height="1.5" fill="#d4d4d4" opacity="0.45"/><rect x="1844" y="257" width="1" height="1.5" fill="#d4d4d4" opacity="0.45"/><rect x="1845" y="257" width="1" height="1.5" fill="#9cdcfe" opacity="0.45"/><rect x="1846" y="257" width="1" height="1.5" fill="#9cdcfe" opacity="0.45"/><rect x="1847" y="257" width="1" height="1.5" fill="#9cdcfe" opacity="0.45"/><rect x="1848" y="257" width="1" height="1.5" fill="#d4d4d4" opacity="0.45"/><rect x="1798" y="261" width="1" height="1.5" fill="#d4d4d4" opacity="0.45"/><rect x="1798" y="263" width="1" height="1.5" fill="#569cd6" opacity="0.45"/><rect x="1799" y="263" width="1" height="1.5" fill="#569cd6" opacity="0.45"/><rect x="1800" y="263" width="1" height="1.5" fill="#569cd6" opacity="0.45"/><rect x="1802" y="263" width="1" height="1.5" fill="#dcdcaa" opacity="0.45"/><rect x="1803" y="263" width="1" height="1.5" fill="#dcdcaa" opacity="0.45"/><rect x="1804" y="263" width="1" height="1.5" fill="#dcdcaa" opacity="0.45"/><rect x="1805" y="263" width="1" height="1.5" fill="#dcdcaa" opacity="0.45"/><rect x="1806" y="263" width="1" height="1.5" fill="#d4d4d4" opacity="0.45"/><rect x="1807" y="263" width="1" height="1.5" fill="#d4d4d4" opacity="0.45"/><rect x="1809" y="263" width="1" height="1.5" fill="#d4d4d4" opacity="0.45"/><rect x="1802" y="265" width="1" height="1.5" fill="#569cd6" opacity="0.45"/><rect x="1803" y="265" width="1" height="1.5" fill="#569cd6" opacity="0.45"/><rect x="1804" y="265" width="1" height="1.5" fill="#569cd6" opacity="0.45"/><rect x="1806" y="265" width="1" height="1.5" fill="#9cdcfe" opacity="0.45"/><rect x="1807" y="265" width="1" height="1.5" fill="#9cdcfe" opacity="0.45"/><rect x="1808" y="265" width="1" height="1.5" fill="#9cdcfe" opacity="0.45"/><rect x="1809" y="265" width="1" height="1.5" fill="#9cdcfe" opacity="0.45"/><rect x="1810" y="265" width="1" height="1.5" fill="#9cdcfe" opacity="0.45"/><rect x="1811" y="265" width="1" height="1.5" fill="#9cdcfe" opacity="0.45"/><rect x="1812" y="265" width="1" height="1.5" fill="#9cdcfe" opacity="0.45"/><rect x="1813" y="265" width="1" height="1.5" fill="#9cdcfe" opacity="0.45"/><rect x="1814" y="265" width="1" height="1.5" fill="#d4d4d4" opacity="0.45"/><rect x="1802" y="267" width="1" height="1.5" fill="#9cdcfe" opacity="0.45"/><rect x="1803" y="267" width="1" height="1.5" fill="#9cdcfe" opacity="0.45"/><rect x="1804" y="267" width="1" height="1.5" fill="#9cdcfe" opacity="0.45"/><rect x="1805" y="267" width="1" height="1.5" fill="#d4d4d4" opacity="0.45"/><rect x="1806" y="267" width="1" height="1.5" fill="#d4d4d4" opacity="0.45"/><rect x="1807" y="267" width="1" height="1.5" fill="#9cdcfe" opacity="0.45"/><rect x="1808" y="267" width="1" height="1.5" fill="#9cdcfe" opacity="0.45"/><rect x="1809" y="267" width="1" height="1.5" fill="#9cdcfe" opacity="0.45"/><rect x="1810" y="267" width="1" height="1.5" fill="#9cdcfe" opacity="0.45"/><rect x="1811" y="267" width="1" height="1.5" fill="#9cdcfe" opacity="0.45"/><rect x="1812" y="267" width="1" height="1.5" fill="#9cdcfe" opacity="0.45"/><rect x="1813" y="267" width="1" height="1.5" fill="#9cdcfe" opacity="0.45"/><rect x="1814" y="267" width="1" height="1.5" fill="#9cdcfe" opacity="0.45"/><rect x="1815" y="267" width="1" height="1.5" fill="#d4d4d4" opacity="0.45"/><rect x="1802" y="269" width="1" height="1.5" fill="#c586c0" opacity="0.45"/><rect x="1803" y="269" width="1" height="1.5" fill="#c586c0" opacity="0.45"/><rect x="1804" y="269" width="1" height="1.5" fill="#c586c0" opacity="0.45"/><rect x="1805" y="269" width="1" height="1.5" fill="#c586c0" opacity="0.45"/><rect x="1806" y="269" width="1" height="1.5" fill="#c586c0" opacity="0.45"/><rect x="1807" y="269" width="1" height="1.5" fill="#d4d4d4" opacity="0.45"/><rect x="1808" y="269" width="1" height="1.5" fill="#9cdcfe" opacity="0.45"/><rect x="1809" y="269" width="1" height="1.5" fill="#9cdcfe" opacity="0.45"/><rect x="1810" y="269" width="1" height="1.5" fill="#9cdcfe" opacity="0.45"/><rect x="1811" y="269" width="1" height="1.5" fill="#9cdcfe" opacity="0.45"/><rect x="1812" y="269" width="1" height="1.5" fill="#9cdcfe" opacity="0.45"/><rect x="1813" y="269" width="1" height="1.5" fill="#9cdcfe" opacity="0.45"/><rect x="1814" y="269" width="1" height="1.5" fill="#9cdcfe" opacity="0.45"/><rect x="1815" y="269" width="1" height="1.5" fill="#9cdcfe" opacity="0.45"/><rect x="1816" y="269" width="1" height="1.5" fill="#d4d4d4" opacity="0.45"/><rect x="1817" y="269" width="1" height="1.5" fill="#d4d4d4" opacity="0.45"/><rect x="1818" y="269" width="1" height="1.5" fill="#b5cea8" opacity="0.45"/><rect x="1819" y="269" width="1" height="1.5" fill="#d4d4d4" opacity="0.45"/><rect x="1820" y="269" width="1" height="1.5" fill="#d4d4d4" opacity="0.45"/><rect x="1806" y="271" width="1" height="1.5" fill="#dcdcaa" opacity="0.45"/><rect x="1807" y="271" width="1" height="1.5" fill="#dcdcaa" opacity="0.45"/><rect x="1808" y="271" width="1" height="1.5" fill="#dcdcaa" opacity="0.45"/><rect x="1809" y="271" width="1" height="1.5" fill="#dcdcaa" opacity="0.45"/><rect x="1810" y="271" width="1" height="1.5" fill="#dcdcaa" opacity="0.45"/><rect x="1811" y="271" width="1" height="1.5" fill="#dcdcaa" opacity="0.45"/><rect x="1812" y="271" width="1" height="1.5" fill="#dcdcaa" opacity="0.45"/><rect x="1813" y="271" width="1" height="1.5" fill="#dcdcaa" opacity="0.45"/><rect x="1814" y="271" width="1" height="1.5" fill="#dcdcaa" opacity="0.45"/><rect x="1815" y="271" width="1" height="1.5" fill="#dcdcaa" opacity="0.45"/><rect x="1816" y="271" width="1" height="1.5" fill="#dcdcaa" opacity="0.45"/><rect x="1817" y="271" width="1" height="1.5" fill="#dcdcaa" opacity="0.45"/><rect x="1818" y="271" width="1" height="1.5" fill="#dcdcaa" opacity="0.45"/><rect x="1819" y="271" width="1" height="1.5" fill="#d4d4d4" opacity="0.45"/><rect x="1820" y="271" width="1" height="1.5" fill="#d4d4d4" opacity="0.45"/><rect x="1821" y="271" width="1" height="1.5" fill="#d4d4d4" opacity="0.45"/><rect x="1824" y="271" width="1" height="1.5" fill="#9cdcfe" opacity="0.45"/><rect x="1825" y="271" width="1" height="1.5" fill="#9cdcfe" opacity="0.45"/><rect x="1826" y="271" width="1" height="1.5" fill="#9cdcfe" opacity="0.45"/><rect x="1827" y="271" width="1" height="1.5" fill="#9cdcfe" opacity="0.45"/><rect x="1828" y="271" width="1" height="1.5" fill="#9cdcfe" opacity="0.45"/><rect x="1829" y="271" width="1" height="1.5" fill="#9cdcfe" opacity="0.45"/><rect x="1830" y="271" width="1" height="1.5" fill="#9cdcfe" opacity="0.45"/><rect x="1831" y="271" width="1" height="1.5" fill="#9cdcfe" opacity="0.45"/><rect x="1832" y="271" width="1" height="1.5" fill="#d4d4d4" opacity="0.45"/><rect x="1833" y="271" width="1" height="1.5" fill="#d4d4d4" opacity="0.45"/><rect x="1834" y="271" width="1" height="1.5" fill="#d4d4d4" opacity="0.45"/><rect x="1802" y="273" width="1" height="1.5" fill="#d4d4d4" opacity="0.45"/><rect x="1805" y="273" width="1" height="1.5" fill="#c586c0" opacity="0.45"/><rect x="1806" y="273" width="1" height="1.5" fill="#c586c0" opacity="0.45"/><rect x="1807" y="273" width="1" height="1.5" fill="#c586c0" opacity="0.45"/><rect x="1808" y="273" width="1" height="1.5" fill="#c586c0" opacity="0.45"/><rect x="1809" y="273" width="1" height="1.5" fill="#c586c0" opacity="0.45"/><rect x="1810" y="273" width="1" height="1.5" fill="#c586c0" opacity="0.45"/><rect x="1812" y="273" width="1" height="1.5" fill="#b5cea8" opacity="0.45"/><rect x="1813" y="273" width="1" height="1.5" fill="#d4d4d4" opacity="0.45"/><rect x="1798" y="275" width="1" height="1.5" fill="#d4d4d4" opacity="0.45"/></svg>
<div style="position:absolute;left:1899px;top:130.5px;width:1px;height:856.5px;background:#3a3a3a;"></div>
<div style="position:absolute;left:1900px;top:539px;width:20px;height:222px;background:rgba(121,121,121,0.4);"></div>
<div style="position:absolute;left:1900px;top:744px;width:20px;height:2px;background:#a0a0a0;"></div>
<div style="position:absolute;left:1899px;top:130.5px;width:21px;height:1px;background:#3a3a3a;"></div>
<svg style="position:absolute;left:0;top:987px" width="51" height="33" viewBox="0 987 51 33"><path d="M19.1 1000.2L25.8 1005.9 19.1 1011.6 M32 994.4L26.2 1000.2 32 1006" fill="none" stroke="#ffffff" stroke-width="1.5"/></svg>
<svg style="position:absolute;left:60px;top:990px" width="70" height="26" viewBox="60 990 70 26"><g fill="none" stroke="#ffffff" stroke-width="1.5"><circle cx="73" cy="1003" r="8.5"/><path d="M69 999l8 8M77 999l-8 8"/><path d="M114 994.5l9 16h-18z" stroke-linejoin="round"/></g><path d="M114 999.5v6" stroke="#ffffff" stroke-width="1.6"/><circle cx="114" cy="1008" r="1" fill="#ffffff"/></svg>
<svg style="position:absolute;left:1828px;top:993px" width="70" height="22" viewBox="1828 993 70 22"><g fill="none" stroke="#ffffff" stroke-width="1.5">
<circle cx="1839.2" cy="1002.5" r="3.8"/><path d="M1833 1012.8c0-4 2.8-6 6.2-6s6.2 2 6.2 6"/><path d="M1838 995h13v9h-3l-3 3v-3"/>
<path d="M1880 1009h15l-2-3v-5a5.5 5.5 0 0 0-11 0v5z M1885.5 1009.5a2 2 0 0 0 4 0"/></g></svg>
<svg style="position:absolute;left:23.9px;top:1037.7px" width="24.3" height="24.6" viewBox="0 0 25 25.3"><g fill="#ffffff"><path d="M0 3.6L10.5 2.2V12H0z"/><path d="M11.8 2L25 0V12H11.8z"/><path d="M0 13.3H10.5V23.1L0 21.7z"/><path d="M11.8 13.3H25V25.3L11.8 23.4z"/></g></svg>
<div style="position:absolute;left:72px;top:1020px;width:516px;height:60px;background:#f2f2f2;box-sizing:border-box;border:2px solid #c9c9c9"></div>
<svg style="position:absolute;left:88px;top:1036px" width="28" height="28" viewBox="0 0 28 28"><g fill="none" stroke="#1a1a1a" stroke-width="1.8"><circle cx="17.5" cy="9.8" r="7.4"/><path d="M12.3 15L2.5 25"/></g></svg>
<svg style="position:absolute;left:610px;top:1036px" width="28" height="28" viewBox="0 0 28 28"><circle cx="14" cy="14" r="10.1" fill="none" stroke="#ffffff" stroke-width="3.3"/></svg>
<svg style="position:absolute;left:680px;top:1036px" width="32" height="28" viewBox="0 0 32 28"><g fill="none" stroke="#ffffff" stroke-width="1.25"><path d="M4.6 1.8V5.6H19.4V1.8"/><rect x="4.6" y="8.4" width="14.8" height="9.8"/><path d="M4.6 25V21.3H19.4V25"/><path d="M26.25 1.8V25"/></g><rect x="24.5" y="8.5" width="3.5" height="3.5" fill="#ffffff"/></svg>
<svg style="position:absolute;left:757px;top:1036px" width="33" height="28" viewBox="0 0 33 28"><path d="M0 3a2.5 2.5 0 0 1 2.5-2.5h9l3 2.5h16a2.5 2.5 0 0 1 2.5 2.5v4H0z" fill="#e3a21a"/><path d="M0 5.5h30.5A2.5 2.5 0 0 1 33 8v15.5a2.5 2.5 0 0 1-2.5 2.5h-28A2.5 2.5 0 0 1 0 23.5z" fill="#fcd462"/><path d="M5.3 27.5V17a2 2 0 0 1 2-2h17a2 2 0 0 1 2 2v10.5h-5.3v-7.2h-10.4v7.2z" fill="#3a96dd"/></svg>
<svg style="position:absolute;left:830px;top:1032px" width="56" height="43" viewBox="0 0 56 43"><defs><linearGradient id="mg" x1="0" y1="0" x2="0" y2="1"><stop offset="0" stop-color="#35b8f5"/><stop offset="1" stop-color="#1a86d6"/></linearGradient></defs>
<path d="M0 10L18 0.5 36 10v23a1.5 1.5 0 0 1-1.5 1.5h-33A1.5 1.5 0 0 1 0 33z" fill="#0b63b8"/>
<path d="M3.5 10.5h29L18 20z" fill="#f0f0f0"/>
<path d="M0 10l18 13 18-13v23a1.5 1.5 0 0 1-1.5 1.5h-33A1.5 1.5 0 0 1 0 33z" fill="url(#mg)"/>
<rect x="13" y="17.2" width="42" height="24.5" rx="12.25" fill="rgba(40,40,40,0.88)" stroke="#9a9a9a" stroke-width="1"/></svg>
<svg style="position:absolute;left:909px;top:1032px" width="28" height="35" viewBox="0 0 28 35"><defs><linearGradient id="og1" x1="0" y1="0" x2="1" y2="0"><stop offset="0" stop-color="#e8581e"/><stop offset="1" stop-color="#d83b01"/></linearGradient><linearGradient id="og2" x1="0" y1="0" x2="0" y2="1"><stop offset="0" stop-color="#a31b1b"/><stop offset="0.6" stop-color="#c9302c"/><stop offset="1" stop-color="#c050a0"/></linearGradient><linearGradient id="og3" x1="0" y1="0" x2="1" y2="0"><stop offset="0" stop-color="#e8243c"/><stop offset="1" stop-color="#f0502a"/></linearGradient></defs>
<path d="M18 0.5L27.5 3.5v28L18 34.5z" fill="url(#og1)"/>
<path d="M0 7L18 0.5v6.5L9 9.5v17.5L0 27.5z" fill="url(#og2)"/>
<path d="M0 27.5L9 27l9 1.5v6L9 30.5z" fill="url(#og3)"/></svg>
<div style="position:absolute;left:962px;top:1020px;width:73px;height:60px;background:#474747;"></div>
<div style="position:absolute;left:962px;top:1077px;width:73px;height:3px;background:#76b9ed;"></div>
<svg style="position:absolute;left:980px;top:1032px" width="36" height="36" viewBox="0 0 24 24"><defs><linearGradient id="lg2" x1="0" y1="0" x2="1" y2="0"><stop offset="0" stop-color="#0a84d8"/><stop offset="0.68" stop-color="#0a78c8"/><stop offset="0.69" stop-color="#23a6f2"/><stop offset="1" stop-color="#23a6f2"/></linearGradient></defs><path fill="url(#lg2)" d="M23.15 2.587L18.21.21a1.494 1.494 0 0 0-1.705.29l-9.46 8.63-4.12-3.128a.999.999 0 0 0-1.276.057L.327 7.261A1 1 0 0 0 .326 8.74L3.899 12 .326 15.26a1 1 0 0 0 .001 1.479L1.65 17.94a.999.999 0 0 0 1.276.057l4.12-3.128 9.46 8.63a1.492 1.492 0 0 0 1.704.29l4.942-2.377A1.5 1.5 0 0 0 24 20.06V3.939a1.5 1.5 0 0 0-.85-1.352zm-5.146 14.861L10.826 12l7.178-5.448v10.896z"/></svg>
<svg style="position:absolute;left:1056.3px;top:1033px" width="33" height="33" viewBox="-16.5 -16.5 33 33">
<path d="M-14.29 -8.25A16.5 16.5 0 0 1 14.29 -8.25L0.00 -7.50A7.5 7.5 0 0 0 -6.50 3.75Z" fill="#db4437"/><path d="M14.29 -8.25A16.5 16.5 0 0 1 0.00 16.50L6.50 3.75A7.5 7.5 0 0 0 -0.00 -7.50Z" fill="#fcc934"/><path d="M0.00 16.50A16.5 16.5 0 0 1 -14.29 -8.25L-6.50 3.75A7.5 7.5 0 0 0 6.50 3.75Z" fill="#1ea362"/>
<circle r="7.5" fill="#f5f5f5"/><circle r="5.9" fill="#4a86e8"/></svg>
<div style="position:absolute;left:1043px;top:1077px;width:61px;height:3px;background:#76b9ed;"></div>
<svg style="position:absolute;left:1268px;top:1032px" width="42" height="38" viewBox="1268 1032 42 38"><circle cx="1287.5" cy="1052" r="15.5" fill="#ffffff"/><circle cx="1287.5" cy="1052" r="13" fill="#1a8fd6"/>
<path d="M1282 1047.5a5.5 5.5 0 0 1 11 0c0 3.5-4 4-4 7.5" fill="none" stroke="#ffffff" stroke-width="3.6"/><circle cx="1289" cy="1059.8" r="2" fill="#ffffff"/>
<circle cx="1299.5" cy="1058.8" r="7.2" fill="#f0a30a"/><rect x="1298.5" y="1056.5" width="2" height="6.5" fill="#ffffff"/><circle cx="1299.5" cy="1054.5" r="1.1" fill="#ffffff"/></svg>
<svg style="position:absolute;left:1346px;top:1036px" width="38" height="27" viewBox="0 0 38 27"><defs><linearGradient id="cg" x1="0" y1="0" x2="1" y2="1"><stop offset="0" stop-color="#d4ecfb"/><stop offset="1" stop-color="#86c6ef"/></linearGradient></defs>
<path d="M14 9a9 9 0 0 1 16.5-2 7 7 0 0 1 4 11" fill="#3a8ad6"/>
<path d="M9 24a6.5 6.5 0 0 1-1.5-12.8A9.5 9.5 0 0 1 25.5 7.5a7.5 7.5 0 0 1 3.5 14.3A4 4 0 0 1 27 24z" fill="url(#cg)"/></svg>
<svg style="position:absolute;left:1462px;top:1041px" width="24" height="16"><path d="M3 13l9-9 9 9" fill="none" stroke="#ffffff" stroke-width="1.4"/></svg>
<svg style="position:absolute;left:1500px;top:1036px" width="24" height="28" viewBox="0 0 24 28"><g fill="none" stroke="#ffffff" stroke-width="1.2"><rect x="3.6" y="9.2" width="9.6" height="9.8" rx="1.5"/><path d="M13.2 12.5l5-3v9.2l-5-3"/><path d="M3.5 4.5a10 10 0 0 1 11.5 0 M3.5 23.5a10 10 0 0 0 11.5 0"/></g></svg>
<svg style="position:absolute;left:1533px;top:1041px" width="27" height="18" viewBox="0 0 27 18"><path d="M4.5 17a4.2 4.2 0 0 1-0.8-8.4 6 6 0 0 1 11-3.5 5 5 0 0 1 5.5 1.5 4.8 4.8 0 0 1 4.8 5.5A4 4 0 0 1 23 17z" fill="#c8c8c8"/><path d="M3.7 8.6a6 6 0 0 1 11-3.5 5 5 0 0 1 5.5 1.5L11 12z" fill="#8c8c8c"/><path d="M1.5 15L11 10.5l14 4.5a3 3 0 0 1-2 2H4.5a3 3 0 0 1-3-2z" fill="#f4f4f4"/></svg>
<svg style="position:absolute;left:1570px;top:1042px" width="26" height="17" viewBox="0 0 26 17"><rect x="1.3" y="1.9" width="21.6" height="13" fill="none" stroke="#ffffff" stroke-width="1.3"/><rect x="3.3" y="3.9" width="9.5" height="9" fill="#ffffff"/><rect x="23" y="6.2" width="1.5" height="4.4" fill="#ffffff"/></svg>
<svg style="position:absolute;left:1607px;top:1038px" width="26" height="26" viewBox="0 0 26 26"><g fill="none" stroke="#ffffff" stroke-width="1.2"><path d="M3.5 22.5A18.5 18.5 0 0 1 21 4.5"/><path d="M8.5 22.5A13.5 13.5 0 0 1 21 9.5"/><path d="M13.5 22.5A8.5 8.5 0 0 1 21 14.5"/></g><circle cx="19.8" cy="21.2" r="1.7" fill="#ffffff"/></svg>
<svg style="position:absolute;left:1641px;top:1039px" width="26" height="22" viewBox="0 0 26 22"><g fill="none" stroke="#ffffff" stroke-width="1.2"><path d="M2 8.5h4.5l7-6.5v18l-7-6.5H2z"/><path d="M17 9a3.5 3.5 0 0 1 0 4.5 M20 6a8 8 0 0 1 0 10.5 M22.8 3a12 12 0 0 1 0 16.5"/></g></svg>
<svg style="position:absolute;left:1855px;top:1034px" width="42" height="42" viewBox="1855 1034 42 42"><path d="M1858 1038h24v19h-9l-4.5 5v-5H1858z" fill="#ffffff"/><g stroke="#1c1c1c" stroke-width="1"><path d="M1863 1043.5h14 M1863 1047h14 M1863 1050.5h10"/></g><circle cx="1881.5" cy="1061" r="11.5" fill="rgba(40,40,40,0.92)" stroke="#8a8a8a" stroke-width="1"/></svg>
<div style="position:absolute;left:1912px;top:1020px;width:2px;height:60px;background:#6a6a6a;"></div>
<div id="t0" style="position:absolute;left:64.08px;top:13.07px;font:400 20px/20px 'Liberation Sans', sans-serif;color:#cccccc;white-space:pre;transform:scaleX(0.9163);transform-origin:0 0;">File</div>
<div id="t1" style="position:absolute;left:117.06px;top:13.07px;font:400 20px/20px 'Liberation Sans', sans-serif;color:#cccccc;white-space:pre;transform:scaleX(0.9438);transform-origin:0 0;">Edit</div>
<div id="t2" style="position:absolute;left:174.50px;top:13.07px;font:400 20px/20px 'Liberation Sans', sans-serif;color:#cccccc;white-space:pre;transform:scaleX(0.9550);transform-origin:0 0;">Selection</div>
<div id="t3" style="position:absolute;left:277.00px;top:13.07px;font:400 20px/20px 'Liberation Sans', sans-serif;color:#cccccc;white-space:pre;transform:scaleX(0.9416);transform-origin:0 0;">View</div>
<div id="t4" style="position:absolute;left:341.02px;top:13.07px;font:400 20px/20px 'Liberation Sans', sans-serif;color:#cccccc;white-space:pre;transform:scaleX(0.9782);transform-origin:0 0;">Go</div>
<div id="t5" style="position:absolute;left:390.05px;top:13.07px;font:400 20px/20px 'Liberation Sans', sans-serif;color:#cccccc;white-space:pre;transform:scaleX(0.9547);transform-origin:0 0;">Run</div>
<div id="t6" style="position:absolute;left:448.00px;top:13.07px;font:400 20px/20px 'Liberation Sans', sans-serif;color:#cccccc;white-space:pre;transform:scaleX(0.9583);transform-origin:0 0;">Terminal</div>
<div id="t7" style="position:absolute;left:544.00px;top:13.07px;font:400 20px/20px 'Liberation Sans', sans-serif;color:#cccccc;white-space:pre;">Help</div>
<div id="t8" style="position:absolute;left:828.61px;top:13.07px;font:400 20px/20px 'Liberation Sans', sans-serif;color:#cccccc;white-space:pre;transform:scaleX(0.8861);transform-origin:0 0;">1501.cpp - jan - Visual Studio Code</div>
<div id="t9" style="position:absolute;left:44.90px;top:87.15px;font:700 14px/14px 'Liberation Sans', sans-serif;color:#ffffff;white-space:pre;transform:scaleX(0.8875);transform-origin:0 0;">2</div>
<div id="t10" style="position:absolute;left:101.69px;top:63.81px;font:400 17px/17px 'Liberation Sans', sans-serif;color:#bbbbbb;white-space:pre;transform:scaleX(0.8148);transform-origin:0 0;">EXPLORER</div>
<div id="t11" style="position:absolute;left:102.30px;top:106.61px;font:700 17px/17px 'Liberation Sans', sans-serif;color:#cccccc;white-space:pre;transform:scaleX(0.9101);transform-origin:0 0;">JAN</div>
<div id="t12" style="position:absolute;left:122.77px;top:137.47px;font:400 20px/20px 'Liberation Sans', sans-serif;color:#cccccc;white-space:pre;transform:scaleX(0.9336);transform-origin:0 0;">.vscode</div>
<div id="t13" style="position:absolute;left:123.06px;top:171.27px;font:400 20px/20px 'Liberation Sans', sans-serif;color:#cccccc;white-space:pre;transform:scaleX(0.9424);transform-origin:0 0;">1501.cpp</div>
<div id="t14" style="position:absolute;left:123.08px;top:204.27px;font:400 20px/20px 'Liberation Sans', sans-serif;color:#cccccc;white-space:pre;transform:scaleX(0.9240);transform-origin:0 0;">1501.exe</div>
<div id="t15" style="position:absolute;left:123.05px;top:237.27px;font:400 20px/20px 'Liberation Sans', sans-serif;color:#cccccc;white-space:pre;transform:scaleX(0.9470);transform-origin:0 0;">13012022.cpp</div>
<div id="t16" style="position:absolute;left:123.07px;top:270.27px;font:400 20px/20px 'Liberation Sans', sans-serif;color:#cccccc;white-space:pre;transform:scaleX(0.9311);transform-origin:0 0;">13012022.exe</div>
<div id="t17" style="position:absolute;left:124.00px;top:303.27px;font:400 20px/20px 'Liberation Sans', sans-serif;color:#cccccc;white-space:pre;transform:scaleX(0.9601);transform-origin:0 0;">array.cpp</div>
<div id="t18" style="position:absolute;left:124.00px;top:336.27px;font:400 20px/20px 'Liberation Sans', sans-serif;color:#cccccc;white-space:pre;transform:scaleX(0.9356);transform-origin:0 0;">array.exe</div>
<div id="t19" style="position:absolute;left:124.00px;top:369.27px;font:400 20px/20px 'Liberation Sans', sans-serif;color:#cccccc;white-space:pre;transform:scaleX(0.9911);transform-origin:0 0;">ff.cpp</div>
<div id="t20" style="position:absolute;left:124.00px;top:402.27px;font:400 20px/20px 'Liberation Sans', sans-serif;color:#cccccc;white-space:pre;transform:scaleX(0.9498);transform-origin:0 0;">ff.exe</div>
<div id="t21" style="position:absolute;left:124.00px;top:435.27px;font:400 20px/20px 'Liberation Sans', sans-serif;color:#cccccc;white-space:pre;transform:scaleX(0.9442);transform-origin:0 0;">tempCodeRunnerFile....</div>
<div id="t22" style="position:absolute;left:102.00px;top:963.61px;font:700 17px/17px 'Liberation Sans', sans-serif;color:#cccccc;white-space:pre;transform:scaleX(0.9425);transform-origin:0 0;">OUTLINE</div>
<div id="t23" style="position:absolute;left:375.00px;top:61.57px;font:400 20px/20px 'Liberation Sans', sans-serif;color:#969696;white-space:pre;transform:scaleX(0.9662);transform-origin:0 0;">array.cpp</div>
<div id="t24" style="position:absolute;left:555.40px;top:61.57px;font:400 20px/20px 'Liberation Sans', sans-serif;color:#969696;white-space:pre;transform:scaleX(0.9308);transform-origin:0 0;">array.exe</div>
<div id="t25" style="position:absolute;left:735.08px;top:61.57px;font:400 20px/20px 'Liberation Sans', sans-serif;color:#969696;white-space:pre;transform:scaleX(0.9231);transform-origin:0 0;">13012022.exe</div>
<div id="t26" style="position:absolute;left:944.46px;top:61.57px;font:400 20px/20px 'Liberation Sans', sans-serif;color:#969696;white-space:pre;transform:scaleX(0.9358);transform-origin:0 0;">13012022.cpp</div>
<div id="t27" style="position:absolute;left:1156.05px;top:61.57px;font:400 20px/20px 'Liberation Sans', sans-serif;color:#ffffff;white-space:pre;transform:scaleX(0.9486);transform-origin:0 0;">1501.cpp</div>
<div id="t28" style="position:absolute;left:1336.00px;top:61.57px;font:400 20px/20px 'Liberation Sans', sans-serif;color:#969696;white-space:pre;transform:scaleX(0.9911);transform-origin:0 0;">ff.cpp</div>
<div id="t29" style="position:absolute;left:384.56px;top:105.56px;font:400 18px/18px 'Liberation Sans', sans-serif;color:#a9a9a9;white-space:pre;transform:scaleX(1.0403);transform-origin:0 0;">1501.cpp</div>
<div id="t30" style="position:absolute;left:514.73px;top:105.56px;font:400 18px/18px 'Liberation Sans', sans-serif;color:#a9a9a9;white-space:pre;transform:scaleX(1.0712);transform-origin:0 0;">main()</div>
<div id="t31" style="position:absolute;left:89.50px;top:993.91px;font:400 19px/19px 'Liberation Sans', sans-serif;color:#ffffff;white-space:pre;transform:scaleX(0.9300);transform-origin:0 0;">0</div>
<div id="t32" style="position:absolute;left:129.50px;top:993.91px;font:400 19px/19px 'Liberation Sans', sans-serif;color:#ffffff;white-space:pre;transform:scaleX(0.9500);transform-origin:0 0;">0</div>
<div id="t33" style="position:absolute;left:1338.49px;top:993.91px;font:400 19px/19px 'Liberation Sans', sans-serif;color:#ffffff;white-space:pre;transform:scaleX(0.9053);transform-origin:0 0;">Ln 72, Col 17</div>
<div id="t34" style="position:absolute;left:1465.00px;top:993.91px;font:400 19px/19px 'Liberation Sans', sans-serif;color:#ffffff;white-space:pre;transform:scaleX(0.8572);transform-origin:0 0;">Spaces: 4</div>
<div id="t35" style="position:absolute;left:1562.12px;top:993.91px;font:400 19px/19px 'Liberation Sans', sans-serif;color:#ffffff;white-space:pre;transform:scaleX(0.8802);transform-origin:0 0;">UTF-8</div>
<div id="t36" style="position:absolute;left:1634.00px;top:993.91px;font:400 19px/19px 'Liberation Sans', sans-serif;color:#ffffff;white-space:pre;transform:scaleX(0.7958);transform-origin:0 0;">CRLF</div>
<div id="t37" style="position:absolute;left:1697.00px;top:993.91px;font:400 19px/19px 'Liberation Sans', sans-serif;color:#ffffff;white-space:pre;transform:scaleX(0.9772);transform-origin:0 0;">C++</div>
<div id="t38" style="position:absolute;left:1757.00px;top:993.91px;font:400 19px/19px 'Liberation Sans', sans-serif;color:#ffffff;white-space:pre;transform:scaleX(0.9383);transform-origin:0 0;">Win32</div>
<div id="t39" style="position:absolute;left:132.50px;top:1041.37px;font:400 22px/22px 'Liberation Sans', sans-serif;color:#1b1b1b;white-space:pre;transform:scaleX(1.0170);transform-origin:0 0;">Type here to search</div>
<div id="t40" style="position:absolute;left:847.70px;top:1051.91px;font:400 19px/19px 'Liberation Sans', sans-serif;color:#ffffff;white-space:pre;transform:scaleX(0.9429);transform-origin:0 0;">99+</div>
<div id="t41" style="position:absolute;left:1395.45px;top:1042.22px;font:400 21px/21px 'Liberation Sans', sans-serif;color:#ffffff;white-space:pre;transform:scaleX(0.9457);transform-origin:0 0;">11°C</div>
<div id="t42" style="position:absolute;left:1681.93px;top:1041.46px;font:400 18px/18px 'Liberation Sans', sans-serif;color:#ffffff;white-space:pre;transform:scaleX(0.8729);transform-origin:0 0;">ENG</div>
<div id="t43" style="position:absolute;left:1745.00px;top:1026.91px;font:400 19px/19px 'Liberation Sans', sans-serif;color:#ffffff;white-space:pre;transform:scaleX(0.9317);transform-origin:0 0;">01:53 PM</div>
<div id="t44" style="position:absolute;left:1736.04px;top:1054.91px;font:400 19px/19px 'Liberation Sans', sans-serif;color:#ffffff;white-space:pre;transform:scaleX(0.9621);transform-origin:0 0;">15-01-2022</div>
<div id="t45" style="position:absolute;left:1876.80px;top:1053.01px;font:400 17px/17px 'Liberation Sans', sans-serif;color:#ffffff;white-space:pre;transform:scaleX(1.0222);transform-origin:0 0;">6</div>
</body></html>
